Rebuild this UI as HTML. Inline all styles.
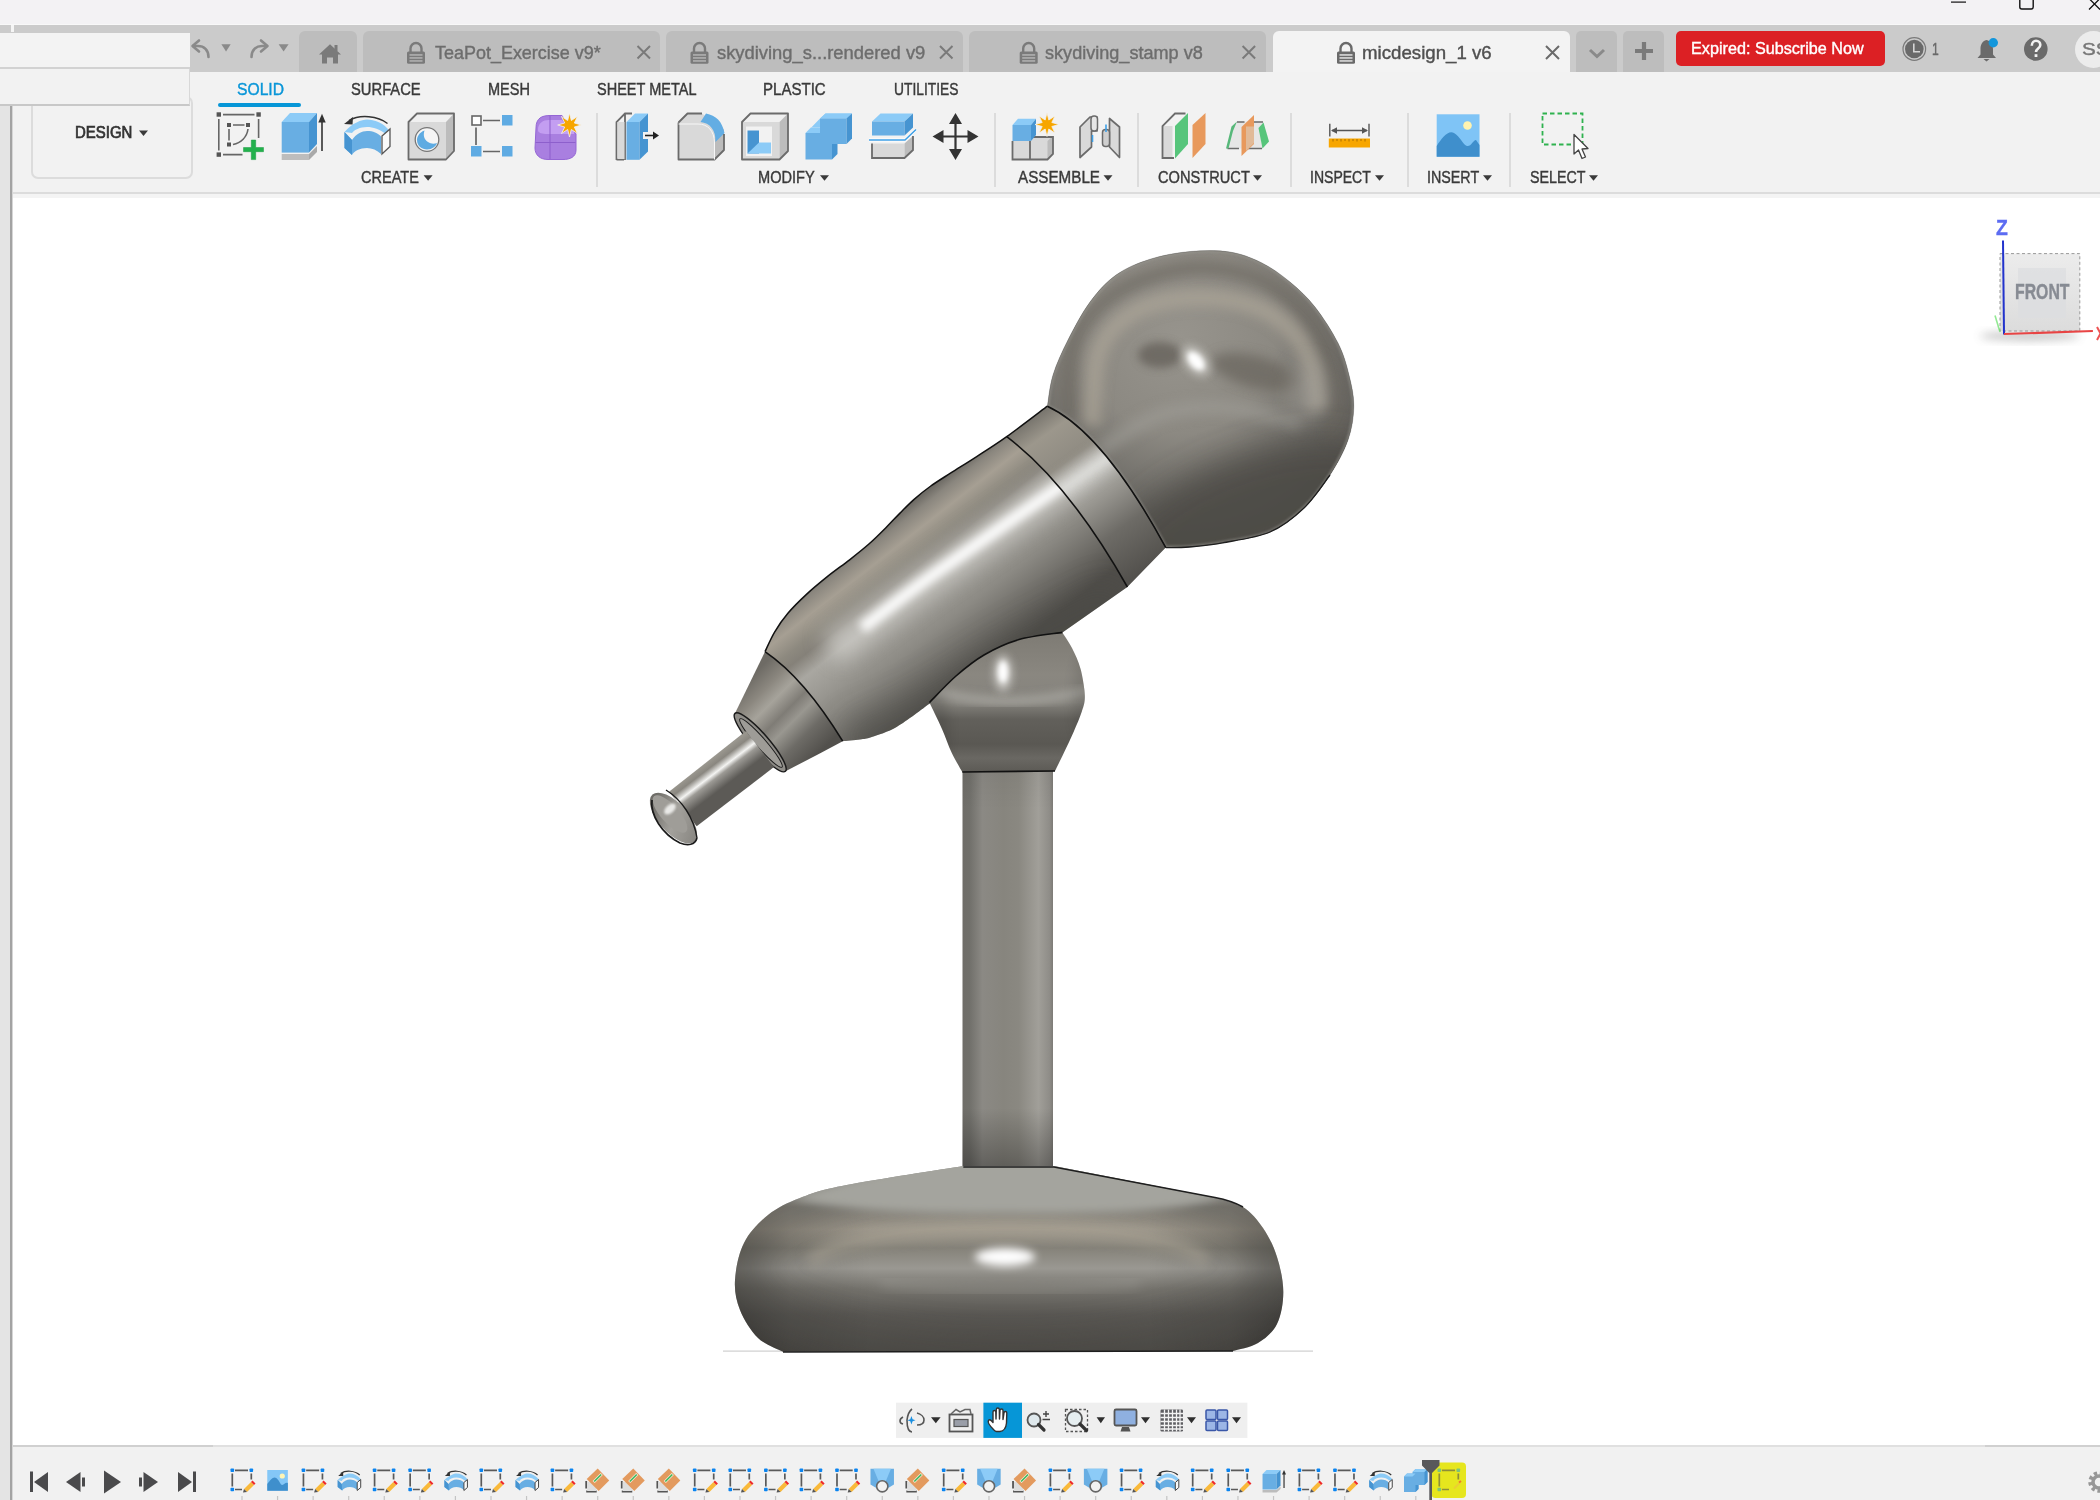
<!DOCTYPE html>
<html><head><meta charset="utf-8">
<style>
*{margin:0;padding:0;box-sizing:border-box}
html,body{width:2100px;height:1500px;overflow:hidden;background:#ffffff;font-family:"Liberation Sans",sans-serif}
.a{position:absolute}
.t{position:absolute;white-space:nowrap;transform-origin:0 0;-webkit-text-stroke:0.4px currentColor}
svg{position:absolute;left:0;top:0;overflow:visible}
</style></head><body>
<div class="a" style="left:0px;top:0px;width:2100px;height:25px;background:#f3f2f4;"></div><div class="a" style="left:0px;top:25px;width:2100px;height:47px;background:#cbcbcb;"></div><div class="a" style="left:0px;top:23.8px;width:2100px;height:1.4px;background:#f8f8f8;"></div><div class="a" style="left:11px;top:25px;width:3px;height:6.8px;background:#f5f5f5;"></div><div class="a" style="left:0px;top:33px;width:190px;height:36px;background:#f3f3f3;border-bottom:2px solid #d2d2d2"></div><div class="a" style="left:0px;top:69px;width:190px;height:37px;background:#f2f2f2;border-bottom:2px solid #c8c8c8;border-right:1px solid #d8d8d8"></div><div class="a" style="left:299px;top:31px;width:58px;height:41px;background:#bdbdbd;border-radius:6px 6px 0 0"></div><div class="a" style="left:363px;top:31px;width:297px;height:41px;background:#bdbdbd;border-radius:6px 6px 0 0"></div><div class="a" style="left:666px;top:31px;width:297px;height:41px;background:#bdbdbd;border-radius:6px 6px 0 0"></div><div class="a" style="left:969px;top:31px;width:297px;height:41px;background:#bdbdbd;border-radius:6px 6px 0 0"></div><div class="a" style="left:1273px;top:31px;width:297px;height:41px;background:#f3f3f3;border-radius:6px 6px 0 0"></div><div class="a" style="left:1576px;top:31px;width:41px;height:41px;background:#bdbdbd;border-radius:5px 5px 0 0"></div><div class="a" style="left:1623px;top:31px;width:41px;height:41px;background:#bdbdbd;border-radius:5px 5px 0 0"></div><div class="a" style="left:1676px;top:31px;width:209px;height:35px;background:#dc2024;border-radius:5px"></div><div class="a" style="left:2075px;top:31px;width:37px;height:37px;border-radius:50%;background:#ececec"></div><div class="a" style="left:190px;top:72px;width:1910px;height:121px;background:#f2f2f2;"></div><div class="a" style="left:13px;top:106px;width:177px;height:87px;background:#f2f2f2;"></div><div class="a" style="left:0px;top:106px;width:10px;height:1394px;background:#e4e4e4;"></div><div class="a" style="left:10px;top:106px;width:2px;height:1394px;background:#a3a3a3;"></div><div class="a" style="left:12px;top:106px;width:1px;height:1394px;background:#d6d6d6;"></div><div class="a" style="left:13px;top:192px;width:2087px;height:2px;background:#dcdcdc;"></div><div class="a" style="left:13px;top:194px;width:2087px;height:4px;background:#f4f4f4;"></div><div class="a" style="left:31px;top:96px;width:162px;height:83px;background:#f2f2f2;border:2px solid #dcdcdc;border-radius:7px"></div><div class="a" style="left:0px;top:69px;width:190px;height:37px;background:#f2f2f2;border-bottom:2px solid #c8c8c8;border-right:1px solid #d8d8d8"></div><div class="a" style="left:218px;top:103px;width:83px;height:4px;background:#0696d7;border-radius:2px"></div><div class="a" style="left:596px;top:113px;width:2px;height:74px;background:#dcdcdc;"></div><div class="a" style="left:994px;top:113px;width:2px;height:74px;background:#dcdcdc;"></div><div class="a" style="left:1137px;top:113px;width:2px;height:74px;background:#dcdcdc;"></div><div class="a" style="left:1290px;top:113px;width:2px;height:74px;background:#dcdcdc;"></div><div class="a" style="left:1407px;top:113px;width:2px;height:74px;background:#dcdcdc;"></div><div class="a" style="left:1509px;top:113px;width:2px;height:74px;background:#dcdcdc;"></div><div class="a" style="left:13px;top:1445px;width:2087px;height:55px;background:#f1f1f1;"></div><div class="a" style="left:13px;top:1444.8px;width:2087px;height:1.8px;background:#e0e0e0;"></div><div class="a" style="left:13px;top:1444.8px;width:200px;height:1.8px;background:#d0d0d0;"></div><div class="a" style="left:1985px;top:1444.8px;width:115px;height:1.8px;background:#d0d0d0;"></div><div class="t" style="left:350.94px;top:81.47px;font-size:16.06px;line-height:16.06px;color:#3a3a3a;font-weight:normal;transform:scaleX(0.9188);">SURFACE</div><div class="t" style="left:488.16px;top:81.47px;font-size:16.06px;line-height:16.06px;color:#3a3a3a;font-weight:normal;transform:scaleX(0.9059);">MESH</div><div class="t" style="left:596.55px;top:81.47px;font-size:16.06px;line-height:16.06px;color:#3a3a3a;font-weight:normal;transform:scaleX(0.9047);">SHEET METAL</div><div class="t" style="left:762.82px;top:81.47px;font-size:16.06px;line-height:16.06px;color:#3a3a3a;font-weight:normal;transform:scaleX(0.9369);">PLASTIC</div><div class="t" style="left:894.14px;top:81.47px;font-size:16.06px;line-height:16.06px;color:#3a3a3a;font-weight:normal;transform:scaleX(0.8599);">UTILITIES</div><div class="t" style="left:236.51px;top:81.47px;font-size:16.06px;line-height:16.06px;color:#0a96d8;font-weight:normal;transform:scaleX(0.9761);">SOLID</div><div class="t" style="left:74.83px;top:123.65px;font-size:16.20px;line-height:16.20px;color:#333333;font-weight:normal;transform:scaleX(0.9242);-webkit-text-stroke:0.7px #333">DESIGN</div><div class="t" style="left:361.22px;top:170.09px;font-size:16.62px;line-height:16.62px;color:#3a3a3a;font-weight:normal;transform:scaleX(0.8763);">CREATE</div><div class="t" style="left:757.86px;top:170.09px;font-size:16.62px;line-height:16.62px;color:#3a3a3a;font-weight:normal;transform:scaleX(0.8788);">MODIFY</div><div class="t" style="left:1018.00px;top:170.09px;font-size:16.62px;line-height:16.62px;color:#3a3a3a;font-weight:normal;transform:scaleX(0.9156);">ASSEMBLE</div><div class="t" style="left:1158.31px;top:170.09px;font-size:16.62px;line-height:16.62px;color:#3a3a3a;font-weight:normal;transform:scaleX(0.8812);">CONSTRUCT</div><div class="t" style="left:1309.90px;top:170.09px;font-size:16.62px;line-height:16.62px;color:#3a3a3a;font-weight:normal;transform:scaleX(0.8446);">INSPECT</div><div class="t" style="left:1426.88px;top:170.09px;font-size:16.62px;line-height:16.62px;color:#3a3a3a;font-weight:normal;transform:scaleX(0.8601);">INSERT</div><div class="t" style="left:1529.55px;top:170.09px;font-size:16.62px;line-height:16.62px;color:#3a3a3a;font-weight:normal;transform:scaleX(0.8583);">SELECT</div><div class="t" style="left:435.02px;top:43.52px;font-size:18.45px;line-height:18.45px;color:#6d6d6d;font-weight:normal;transform:scaleX(0.9741);">TeaPot_Exercise v9*</div><div class="t" style="left:716.61px;top:43.52px;font-size:18.45px;line-height:18.45px;color:#6d6d6d;font-weight:normal;transform:scaleX(0.9962);">skydiving_s...rendered v9</div><div class="t" style="left:1045.12px;top:43.52px;font-size:18.45px;line-height:18.45px;color:#6d6d6d;font-weight:normal;transform:scaleX(0.9808);">skydiving_stamp v8</div><div class="t" style="left:1362.13px;top:43.52px;font-size:18.45px;line-height:18.45px;color:#505050;font-weight:normal;transform:scaleX(1.0127);">micdesign_1 v6</div><div class="t" style="left:1691.13px;top:40.11px;font-size:17.18px;line-height:17.18px;color:#ffffff;font-weight:normal;transform:scaleX(0.9427);">Expired: Subscribe Now</div><div class="t" style="left:1931.74px;top:41.15px;font-size:16.20px;line-height:16.20px;color:#6a6a6a;font-weight:normal;transform:scaleX(0.7494);">1</div><div class="t" style="left:2082.36px;top:41.47px;font-size:16.06px;line-height:16.06px;color:#777777;font-weight:normal;transform:scaleX(1.2844);">SS</div><svg width="2100" height="1500" viewBox="0 0 2100 1500"><path d="M208.5,57 C208.5,50 204,46 198,46 L193.5,46" fill="none" stroke="#8a8a8a" stroke-width="2.6" stroke-linecap="round"/><path d="M199,40.5 L192.5,46 L199,51.5" fill="none" stroke="#8a8a8a" stroke-width="2.6" stroke-linecap="round" stroke-linejoin="round"/><path d="M221.4,44.3 L230.7,44.3 L226.05,51.4 Z" fill="#8a8a8a"/><path d="M251.5,57 C251.5,50 256,46 262,46 L266.5,46" fill="none" stroke="#8a8a8a" stroke-width="2.6" stroke-linecap="round"/><path d="M261,40.5 L267.5,46 L261,51.5" fill="none" stroke="#8a8a8a" stroke-width="2.6" stroke-linecap="round" stroke-linejoin="round"/><path d="M278.6,44.3 L288.6,44.3 L283.6,51.4 Z" fill="#8a8a8a"/><path d="M319,54.5 L330,44.3 L341,54.5 L338,54.5 L338,63.5 L333,63.5 L333,57.5 L327,57.5 L327,63.5 L322,63.5 L322,54.5 Z" fill="#7a7a7a"/><rect x="334.5" y="45" width="3" height="6" fill="#7a7a7a"/><path d="M410.5,52 L410.5,48.5 A5.5,5.5 0 0 1 421.5,48.5 L421.5,52" fill="none" stroke="#7a7a7a" stroke-width="2.4"/><rect x="407" y="51.5" width="18" height="12.2" rx="1.5" fill="#7a7a7a"/><rect x="409.5" y="54.3" width="13" height="1.3" fill="#bdbdbd"/><rect x="409.5" y="57.3" width="13" height="1.3" fill="#bdbdbd"/><rect x="409.5" y="60.3" width="13" height="1.3" fill="#bdbdbd"/><path d="M637.5,46 L650.0,58.5 M650.0,46 L637.5,58.5" stroke="#7a7a7a" stroke-width="2"/><path d="M694.0,52 L694.0,48.5 A5.5,5.5 0 0 1 705.0,48.5 L705.0,52" fill="none" stroke="#7a7a7a" stroke-width="2.4"/><rect x="690.5" y="51.5" width="18" height="12.2" rx="1.5" fill="#7a7a7a"/><rect x="693.0" y="54.3" width="13" height="1.3" fill="#bdbdbd"/><rect x="693.0" y="57.3" width="13" height="1.3" fill="#bdbdbd"/><rect x="693.0" y="60.3" width="13" height="1.3" fill="#bdbdbd"/><path d="M940,46 L952.5,58.5 M952.5,46 L940,58.5" stroke="#7a7a7a" stroke-width="2"/><path d="M1023.2,52 L1023.2,48.5 A5.5,5.5 0 0 1 1034.2,48.5 L1034.2,52" fill="none" stroke="#7a7a7a" stroke-width="2.4"/><rect x="1019.7" y="51.5" width="18" height="12.2" rx="1.5" fill="#7a7a7a"/><rect x="1022.2" y="54.3" width="13" height="1.3" fill="#bdbdbd"/><rect x="1022.2" y="57.3" width="13" height="1.3" fill="#bdbdbd"/><rect x="1022.2" y="60.3" width="13" height="1.3" fill="#bdbdbd"/><path d="M1242.6,46 L1255.1,58.5 M1255.1,46 L1242.6,58.5" stroke="#7a7a7a" stroke-width="2"/><path d="M1340.5,52 L1340.5,48.5 A5.5,5.5 0 0 1 1351.5,48.5 L1351.5,52" fill="none" stroke="#6a6a6a" stroke-width="2.4"/><rect x="1337" y="51.5" width="18" height="12.2" rx="1.5" fill="#6a6a6a"/><rect x="1339.5" y="54.3" width="13" height="1.3" fill="#f3f3f3"/><rect x="1339.5" y="57.3" width="13" height="1.3" fill="#f3f3f3"/><rect x="1339.5" y="60.3" width="13" height="1.3" fill="#f3f3f3"/><path d="M1546,46 L1559,59 M1559,46 L1546,59" stroke="#6a6a6a" stroke-width="2"/><path d="M1590,50 L1597,56.5 L1604,50" fill="none" stroke="#8a8a8a" stroke-width="3"/><path d="M1644,42 L1644,60 M1635,51 L1653,51" stroke="#7a7a7a" stroke-width="4.2"/><circle cx="1914.3" cy="49" r="11.3" fill="none" stroke="#7a7a7a" stroke-width="1.2"/><circle cx="1914.3" cy="49" r="9.3" fill="#6a6a6a"/><path d="M1913.8,43.5 L1913.8,51.8 L1920,51.8" fill="none" stroke="#d6d6d6" stroke-width="1.6"/><path d="M1986.5,37.5 L1986.5,40 C1982,41 1980.5,45 1980.5,49 L1980.5,54.5 L1977.5,58 L1996,58 L1993,54.5 L1993,49 C1993,45 1991,41 1986.5,40 Z" fill="#6a6a6a"/><path d="M1983.5,59 L1989.5,59 L1986.5,61.5 Z" fill="#6a6a6a"/><circle cx="1993.3" cy="42.8" r="4.7" fill="#1296db"/><circle cx="2035.8" cy="49" r="11.8" fill="#6a6a6a"/><path d="M2031.8,45.8 C2031.8,42.5 2034,40.8 2036,40.8 C2038.5,40.8 2040.3,42.6 2040.3,45 C2040.3,48.5 2036,48.6 2036,52" fill="none" stroke="#f2f2f2" stroke-width="2.6"/><rect x="2034.6" y="54.2" width="2.8" height="2.8" fill="#f2f2f2"/><rect x="1951" y="1.5" width="15" height="1.2" fill="#111"/><rect x="2019.8" y="-6" width="13.4" height="15" rx="2" fill="none" stroke="#111" stroke-width="1.4"/><path d="M2089,9.5 L2100,-1.5 M2089,-1.5 L2100,9.5" stroke="#111" stroke-width="1.3"/><path d="M139,130.5 L148,130.5 L143.5,136.0 Z" fill="#3a3a3a"/><path d="M423.6,175.3 L432.6,175.3 L428.1,180.8 Z" fill="#3a3a3a"/><path d="M820,175.3 L829,175.3 L824.5,180.8 Z" fill="#3a3a3a"/><path d="M1103.5,175.3 L1112.5,175.3 L1108.0,180.8 Z" fill="#3a3a3a"/><path d="M1253,175.3 L1262,175.3 L1257.5,180.8 Z" fill="#3a3a3a"/><path d="M1375,175.3 L1384,175.3 L1379.5,180.8 Z" fill="#3a3a3a"/><path d="M1483,175.3 L1492,175.3 L1487.5,180.8 Z" fill="#3a3a3a"/><path d="M1589,175.3 L1598,175.3 L1593.5,180.8 Z" fill="#3a3a3a"/><g stroke="#666" stroke-width="1.6" fill="none"><path d="M223,114.6 L254.5,114.6 M218.8,119 L218.8,150.5 M258.6,119 L258.6,138 M223,154.6 L242.5,154.6"/><path d="M233,125 L244.5,125 M229,129 L229,140.5 M248,129 C247,137 241,143 233,144.5"/></g><rect x="216.60000000000002" y="112.3" width="4.4" height="4.4" fill="#555"/><rect x="256.40000000000003" y="112.3" width="4.4" height="4.4" fill="#555"/><rect x="216.60000000000002" y="152.4" width="4.4" height="4.4" fill="#555"/><rect x="227.0" y="123.0" width="4" height="4" fill="#555"/><rect x="246.0" y="123.0" width="4" height="4" fill="#555"/><rect x="227.0" y="142.5" width="4" height="4" fill="#555"/><path d="M251.3,140 L255.7,140 L255.7,147.5 L263.5,147.5 L263.5,151.7 L255.7,151.7 L255.7,159.6 L251.3,159.6 L251.3,151.7 L243.5,151.7 L243.5,147.5 L251.3,147.5 Z" fill="#22b14c" stroke="#1a9a40" stroke-width="0.5"/><path d="M281.7,154 L309,154 L309,160 L281.7,160 Z" fill="#bdbdbd"/><path d="M309,154 L317,146 L317,152 L309,160 Z" fill="#a9a9a9"/><path d="M281.7,122 L290,113 L317,113 L309,122 Z" fill="#8ccbf7"/><rect x="281.7" y="122" width="27.3" height="30.6" fill="#68aee3"/><path d="M309,122 L317,113 L317,144 L309,152.6 Z" fill="#4694d1"/><path d="M322,120 L322,151" stroke="#333" stroke-width="1.6"/><path d="M318.3,122.5 L322,113.8 L325.7,122.5 Z" fill="#333"/><path d="M344.5,132 C352,123 362,119.5 367,119.5 C374,119.5 384,123 389.5,131 L386,134 C380,129.5 373,127 367,127 C360,127 354,130 352,133 Z" fill="#8ccbf7"/><path d="M344.5,132 L352,140 C356,134 362,131 367,131 C373,131 378,133 381,136.5 L381,154 C377,150 372,148 367,148 C360,148 354,151 352,155 L344.5,148 Z" fill="#68aee3"/><path d="M344.5,132 L352,140 L352,155 L344.5,148 Z" fill="#4694d1"/><path d="M382,136 L390,129 L390,146.5 L382,154 Z" fill="#fafafa" stroke="#555" stroke-width="1.3"/><path d="M387.5,123.5 C378,116 360,114 349,120.5" fill="none" stroke="#333" stroke-width="1.4"/><path d="M344,124 L353,117 L352.5,124.5 Z" fill="#333"/><path d="M408.5,122 L417,113.5 L454,113.5 L446,122 Z" fill="#f0f0f0"/><rect x="408.5" y="122" width="37.5" height="37.5" fill="#d9d9d9"/><path d="M446,122 L454,113.5 L454,151 L446,159.5 Z" fill="#bcbcbc"/><path d="M408.5,159.5 L408.5,122 L417,113.5 L454,113.5 L454,151 L446,159.5 Z" fill="none" stroke="#6b6b6b" stroke-width="1.8" stroke-linejoin="round"/><circle cx="427" cy="139.5" r="11.8" fill="#f5f5f5" stroke="#777" stroke-width="1.3"/><path d="M424.5,130.5 C419,132.5 417,137 417,140 C417,146 422,149.5 427,149.5 C432,149.5 436,146.5 437,143 C434,144 431,144 428,142 C424,139.5 423,135 424.5,130.5 Z" fill="#5eabe2"/><path d="M483,120.5 L500,120.5 M476,127.5 L476,145 M483,151.5 L500,151.5" stroke="#666" stroke-width="1.7"/><rect x="472" y="116" width="9" height="9" fill="#fff" stroke="#666" stroke-width="1.6"/><rect x="502" y="115" width="10.5" height="10.5" fill="#5fabe3"/><rect x="471" y="146" width="10.5" height="10.5" fill="#5fabe3"/><rect x="502" y="146" width="10.5" height="10.5" fill="#5fabe3"/><path d="M536,128 C536,118 542,115.5 550,115.5 L562,115.5 L566,122 L574,130 L576,134 L576,150 C576,157 570,159.5 563,159.5 L548,159.5 C540,159.5 535,155 535,148 Z" fill="#a97fe0" stroke="#9466d4" stroke-width="1"/><path d="M538,130 C538,123 543,120 549,120 L562,120 L566,126 L574,131 L574,134 L548,134 C542,134 538,133 538,130 Z" fill="#c9a6f5" opacity="0.8"/><path d="M550,116 L550,159 M535.5,142.5 L575.5,142.5" stroke="#8d5fcc" stroke-width="1"/><path d="M569.5,113 L571.3,120.5 L577.5,116.5 L574.3,123 L581.3,125 L574.3,127 L577.5,133.5 L571.3,129.5 L569.5,137 L567.7,129.5 L561.5,133.5 L564.7,127 L557.7,125 L564.7,123 L561.5,116.5 L567.7,120.5 Z" fill="#f7a600" stroke="#f2f2f2" stroke-width="0.8"/><path d="M625,113.5 L625,160 M616.5,160 L616.5,122 L625,113.5 L632,113.5 M616.5,159.5 L624,159.5" fill="none" stroke="#6b6b6b" stroke-width="1.8"/><rect x="617.5" y="122" width="7" height="37" fill="#d9d9d9"/><path d="M626.5,122 L635,113.5 L648,113.5 L639.5,122 Z" fill="#8ccbf7"/><rect x="626.5" y="122" width="13" height="37.8" fill="#68aee3"/><path d="M639.5,122 L648,113.5 L648,151.5 L639.5,159.8 Z" fill="#4694d1"/><rect x="643" y="132" width="6" height="7" fill="#f2f2f2"/><path d="M645,135.5 L654,135.5" stroke="#222" stroke-width="1.6"/><path d="M653,131.5 L659,135.5 L653,139.5 Z" fill="#222"/><path d="M678.5,159.5 L678.5,124 L687.5,113.5 L702,113.5 L724,130 L724,150 L714.5,159.5 Z" fill="#d9d9d9"/><path d="M714.5,138 L724,129 L724,150 L714.5,159.5 Z" fill="#bcbcbc"/><path d="M700.5,122 C710,123 716,130 715.5,142 L724.5,133 C722,121 716,115.5 706,113.5 Z" fill="#63ade3"/><path d="M678.5,122.5 L678.5,159.5 L714.5,159.5 L724,150 L724,134 M678.5,122.5 L687.5,113.5 L702,113.5" fill="none" stroke="#6b6b6b" stroke-width="1.8" stroke-linejoin="round"/><path d="M678.5,124 L698,124 C708,124 714,131 714.5,142 L714.5,159.5" fill="none" stroke="#f7f7f7" stroke-width="1"/><path d="M742,122 L750.5,113.5 L788,113.5 L779.5,122 Z" fill="#f0f0f0"/><rect x="742" y="122" width="37.5" height="37.5" fill="#d9d9d9"/><path d="M779.5,122 L788,113.5 L788,151 L779.5,159.5 Z" fill="#bcbcbc"/><rect x="746" y="126.5" width="26" height="29.5" fill="#f2f2f2"/><rect x="747.5" y="130.5" width="11.5" height="23" fill="#4694d1"/><path d="M747.5,153.5 L759,142.5 L771,142.5 L771,153.5 Z" fill="#8ccbf7"/><path d="M742,159.5 L742,122 L750.5,113.5 L788,113.5 L788,151 L779.5,159.5 Z" fill="none" stroke="#6b6b6b" stroke-width="1.8" stroke-linejoin="round"/><path d="M805.5,133.5 L811,127.5 L820,127.5 L820,118.5 L825.5,113.5 L852,113.5 L847,118.5 L820,118.5" fill="#8ccbf7"/><path d="M805.5,133 L811,127.5 L822,127.5 L822,133 Z" fill="#8ccbf7"/><path d="M820,118.5 L825.5,113.5 L852,113.5 L846.5,118.5 Z" fill="#8ccbf7"/><path d="M805.5,133 L820,133 L820,118.5 L846.5,118.5 L846.5,144 L832,144 L832,159.5 L805.5,159.5 Z" fill="#68aee3"/><path d="M846.5,118.5 L852,113.5 L852,138.5 L846.5,144 Z" fill="#4694d1"/><path d="M832,144 L837.5,144 L837.5,154 L832,159.5 Z" fill="#4694d1"/><path d="M872,121.5 L880.5,113.5 L913,113.5 L904.5,121.5 Z" fill="#8ccbf7"/><rect x="872" y="121.5" width="32.5" height="14" fill="#68aee3"/><path d="M904.5,121.5 L913,113.5 L913,127.5 L904.5,135.5 Z" fill="#4694d1"/><path d="M869,140 L905,140 L916,129.5" fill="none" stroke="#fff" stroke-width="3"/><path d="M869,140 L905,140 L916,129.5" fill="none" stroke="#3fa0e6" stroke-width="1.6"/><rect x="872" y="143.5" width="32.5" height="14.5" fill="#d9d9d9"/><path d="M904.5,143.5 L913,136 L913,150 L904.5,158 Z" fill="#bcbcbc"/><path d="M872,143.5 L872,158 L904.5,158 L913,150 L913,136" fill="none" stroke="#6b6b6b" stroke-width="1.8"/><path d="M955.5,121 L955.5,152 M940,136.5 L971,136.5" stroke="#333" stroke-width="2.2"/><path d="M955.5,113 L962,124 L949,124 Z M955.5,160 L962,149 L949,149 Z M932.5,136.5 L943.5,130 L943.5,143 Z M978.5,136.5 L967.5,130 L967.5,143 Z" fill="#333"/><path d="M1012.5,141 L1012.5,159.5 L1047.5,159.5 L1053,154 L1053,137 L1030,137 L1029.5,141 Z" fill="#d9d9d9"/><path d="M1047.5,141 L1053,136 L1053,154 L1047.5,159.5 Z" fill="#bcbcbc"/><path d="M1012.5,141 L1012.5,159.5 L1047.5,159.5 L1053,154 L1053,137 L1030,137 M1030,141 L1030,159.5" fill="none" stroke="#6b6b6b" stroke-width="1.8"/><path d="M1012.5,125 L1018,118.8 L1036,118.8 L1031,125 Z" fill="#8ccbf7"/><rect x="1012.5" y="125" width="18.5" height="16" fill="#68aee3"/><path d="M1031,125 L1036,118.8 L1036,135 L1031,141 Z" fill="#4694d1"/><path d="M1047,112.8 L1048.8,120 L1055,116 L1051.8,122.5 L1059,124.5 L1051.8,126.5 L1055,133 L1048.8,129 L1047,136.5 L1045.2,129 L1039,133 L1042.2,126.5 L1035,124.5 L1042.2,122.5 L1039,116 L1045.2,120 Z" fill="#f7a600" stroke="#f2f2f2" stroke-width="0.8"/><path d="M1080,157.5 L1080,127 L1090,117 L1097,117 L1097,131 L1091.5,131 L1091.5,147 Z" fill="#d9d9d9" stroke="#6b6b6b" stroke-width="1.7" stroke-linejoin="round"/><rect x="1091" y="116" width="6.5" height="15" rx="3" fill="#e6e6e6" stroke="#6b6b6b" stroke-width="1.5"/><path d="M1119.5,157.5 L1119.5,127 L1109.5,118.5 L1109.5,147 Z" fill="#d9d9d9" stroke="#6b6b6b" stroke-width="1.7" stroke-linejoin="round"/><rect x="1102.5" y="129.5" width="7" height="17" rx="3" fill="#cfcfcf" stroke="#6b6b6b" stroke-width="1.5"/><path d="M1092.5,135 L1092.5,142 M1106,124.5 L1106,132" stroke="#3fa0e6" stroke-width="1.6"/><rect x="1162.5" y="126" width="10" height="32" fill="#d9d9d9"/><path d="M1174,158 L1162.5,158 L1162.5,126 L1175,113.5 L1185.5,113.5" fill="none" stroke="#6b6b6b" stroke-width="1.8"/><path d="M1175,126 L1188,113 L1188,144 L1175,158.5 Z" fill="#57c57b"/><path d="M1192.5,125 L1205.5,113 L1205.5,144 L1192.5,158 Z" fill="#e8995c"/><path d="M1227,148.5 L1232,127 L1237,121.5 L1263,121.5 L1267.5,141.5 L1262,148.5 Z" fill="#e6e6e6"/><path d="M1227.5,148.5 L1239,148.5 M1246,148.5 L1262,148.5 M1237,122 L1244.5,122 M1251,122 L1263,122" stroke="#6b6b6b" stroke-width="1.7"/><path d="M1226,148.5 L1231.5,126.5 L1237,121.5 L1233,131 L1228.5,148.5 Z" fill="#57b87a"/><path d="M1258.5,128 L1263.5,122.5 L1269,141.5 L1262.5,148.5 Z" fill="#57c57b"/><path d="M1241.5,127 L1254,115 L1254,144 L1241.5,156 Z" fill="#e8995c"/><path d="M1246,126.5 L1254,126.5 L1254,143 L1246,151 Z" fill="#dfc2a8" opacity="0.8"/><rect x="1328.8" y="138.5" width="41.2" height="9" fill="#f7a600"/><path d="M1333,139 L1333,141.5 M1337,139 L1337,141 M1341,139 L1341,141.5 M1345,139 L1345,141 M1349,139 L1349,141.5 M1353,139 L1353,141 M1357,139 L1357,141.5 M1361,139 L1361,141 M1365,139 L1365,141.5" stroke="#a06800" stroke-width="0.9"/><path d="M1329.8,123.8 L1329.8,136.5 M1369,123.8 L1369,136.5 M1332,130.5 L1367,130.5" stroke="#555" stroke-width="1.4"/><path d="M1331,130.5 L1337,127.3 L1337,133.7 Z M1368,130.5 L1362,127.3 L1362,133.7 Z" fill="#555"/><rect x="1436.7" y="114.3" width="42.8" height="42.4" fill="#7fc4f6"/><path d="M1436.7,146 C1442,138 1448,130 1454,133 C1460,136 1463,145 1467,146 C1471,147 1473,140 1476,140 L1479.5,145 L1479.5,156.7 L1436.7,156.7 Z" fill="#3f8fcc"/><circle cx="1467.5" cy="125.5" r="4.3" fill="#fff3b0"/><rect x="1542.5" y="113.5" width="40" height="31" fill="none" stroke="#2fb24f" stroke-width="1.8" stroke-dasharray="4.5,3"/><path d="M1574,134.5 L1574,154 L1578.5,150 L1582,158.5 L1585.5,157 L1582,149 L1588,148.5 Z" fill="#fff" stroke="#444" stroke-width="1.3" stroke-linejoin="round"/></svg><svg width="2100" height="1500" viewBox="0 0 2100 1500"><rect x="30" y="1471.5" width="3" height="20.5" fill="#4a4a4c"/><path d="M34,1482 L48,1472 L48,1492 Z" fill="#4a4a4c"/><path d="M66,1482 L80.5,1472 L80.5,1492 Z" fill="#4a4a4c"/><rect x="82" y="1477.5" width="3" height="9" fill="#4a4a4c"/><path d="M104,1470.5 L121,1482 L104,1493.5 Z" fill="#4a4a4c"/><rect x="139" y="1477.5" width="3" height="9" fill="#4a4a4c"/><path d="M143.5,1472 L158,1482 L143.5,1492 Z" fill="#4a4a4c"/><path d="M178,1472 L192,1482 L178,1492 Z" fill="#4a4a4c"/><rect x="193" y="1471.5" width="3" height="20.5" fill="#4a4a4c"/><path d="M235.0,1470.3 L248.0,1470.3 M232.3,1473.5 L232.3,1486.5 M251.3,1473.5 L251.3,1479.5 M235.0,1489.5 L242.0,1489.5" stroke="#5a5a5a" stroke-width="1.7"/><rect x="230.5" y="1468.5" width="3.6" height="3.6" rx="0.8" fill="#0a84f0"/><rect x="249.5" y="1468.5" width="3.6" height="3.6" rx="0.8" fill="#0a84f0"/><rect x="230.5" y="1487.7" width="3.6" height="3.6" rx="0.8" fill="#0a84f0"/><path d="M244.0,1489.0 L251.0,1482.0 L254.0,1485.0 L247.0,1492.0 Z" fill="#f9b93a"/><path d="M251.0,1482.0 L252.5,1480.5 L255.5,1483.5 L254.0,1485.0 Z" fill="#ee2a2a"/><path d="M244.0,1489.0 L247.0,1492.0 L243.0,1492.5 Z" fill="#555"/><rect x="241.4" y="1496" width="1.2" height="4" fill="#c4c4c4"/><rect x="267.27" y="1470" width="20.6" height="20.7" fill="#84c7f7"/><path d="M267.27,1484 C270.27,1480 273.27,1476 276.27,1478 C279.27,1480 280.27,1485 282.27,1485 C284.27,1485 285.27,1482 287.87,1483 L287.87,1490.7 L267.27,1490.7 Z" fill="#3f8fcc"/><circle cx="282.27" cy="1476" r="2.6" fill="#fff5b5"/><rect x="276.96999999999997" y="1496" width="1.2" height="4" fill="#c4c4c4"/><path d="M306.14,1470.3 L319.14,1470.3 M303.44,1473.5 L303.44,1486.5 M322.44,1473.5 L322.44,1479.5 M306.14,1489.5 L313.14,1489.5" stroke="#5a5a5a" stroke-width="1.7"/><rect x="301.64" y="1468.5" width="3.6" height="3.6" rx="0.8" fill="#0a84f0"/><rect x="320.64" y="1468.5" width="3.6" height="3.6" rx="0.8" fill="#0a84f0"/><rect x="301.64" y="1487.7" width="3.6" height="3.6" rx="0.8" fill="#0a84f0"/><path d="M315.14,1489.0 L322.14,1482.0 L325.14,1485.0 L318.14,1492.0 Z" fill="#f9b93a"/><path d="M322.14,1482.0 L323.64,1480.5 L326.64,1483.5 L325.14,1485.0 Z" fill="#ee2a2a"/><path d="M315.14,1489.0 L318.14,1492.0 L314.14,1492.5 Z" fill="#555"/><rect x="312.53999999999996" y="1496" width="1.2" height="4" fill="#c4c4c4"/><path d="M337.71000000000004,1480 C342.71000000000004,1475 347.71000000000004,1473.5 349.71000000000004,1473.5 C353.71000000000004,1473.5 357.71000000000004,1475.5 360.71000000000004,1479 L358.71000000000004,1481 C355.71000000000004,1478.5 352.71000000000004,1477.5 349.71000000000004,1477.5 C345.71000000000004,1477.5 342.71000000000004,1479 341.71000000000004,1481 Z" fill="#8ccbf7"/><path d="M337.71000000000004,1480 L341.71000000000004,1484 C343.71000000000004,1481 346.71000000000004,1479.5 349.71000000000004,1479.5 C352.71000000000004,1479.5 355.71000000000004,1480.5 357.21000000000004,1482.5 L357.21000000000004,1490 C355.21000000000004,1488 352.71000000000004,1487 349.71000000000004,1487 C346.21000000000004,1487 343.71000000000004,1488.5 342.21000000000004,1490.5 L337.71000000000004,1487 Z" fill="#68aee3"/><path d="M337.71000000000004,1480 L341.71000000000004,1484 L342.21000000000004,1490.5 L337.71000000000004,1487 Z" fill="#4694d1"/><path d="M357.21000000000004,1482.5 L360.71000000000004,1479.5 L360.71000000000004,1487.5 L357.21000000000004,1490.5 Z" fill="#fafafa" stroke="#444" stroke-width="1"/><path d="M359.71000000000004,1475 C354.71000000000004,1470.5 345.71000000000004,1470 340.71000000000004,1473.5" fill="none" stroke="#333" stroke-width="1.2"/><path d="M338.21000000000004,1476 L343.21000000000004,1471.5 L343.21000000000004,1476 Z" fill="#333"/><rect x="348.11" y="1496" width="1.2" height="4" fill="#c4c4c4"/><path d="M377.28,1470.3 L390.28,1470.3 M374.58,1473.5 L374.58,1486.5 M393.58,1473.5 L393.58,1479.5 M377.28,1489.5 L384.28,1489.5" stroke="#5a5a5a" stroke-width="1.7"/><rect x="372.78" y="1468.5" width="3.6" height="3.6" rx="0.8" fill="#0a84f0"/><rect x="391.78" y="1468.5" width="3.6" height="3.6" rx="0.8" fill="#0a84f0"/><rect x="372.78" y="1487.7" width="3.6" height="3.6" rx="0.8" fill="#0a84f0"/><path d="M386.28,1489.0 L393.28,1482.0 L396.28,1485.0 L389.28,1492.0 Z" fill="#f9b93a"/><path d="M393.28,1482.0 L394.78,1480.5 L397.78,1483.5 L396.28,1485.0 Z" fill="#ee2a2a"/><path d="M386.28,1489.0 L389.28,1492.0 L385.28,1492.5 Z" fill="#555"/><rect x="383.67999999999995" y="1496" width="1.2" height="4" fill="#c4c4c4"/><path d="M412.85,1470.3 L425.85,1470.3 M410.15000000000003,1473.5 L410.15000000000003,1486.5 M429.15000000000003,1473.5 L429.15000000000003,1479.5 M412.85,1489.5 L419.85,1489.5" stroke="#5a5a5a" stroke-width="1.7"/><rect x="408.35" y="1468.5" width="3.6" height="3.6" rx="0.8" fill="#0a84f0"/><rect x="427.35" y="1468.5" width="3.6" height="3.6" rx="0.8" fill="#0a84f0"/><rect x="408.35" y="1487.7" width="3.6" height="3.6" rx="0.8" fill="#0a84f0"/><path d="M421.85,1489.0 L428.85,1482.0 L431.85,1485.0 L424.85,1492.0 Z" fill="#f9b93a"/><path d="M428.85,1482.0 L430.35,1480.5 L433.35,1483.5 L431.85,1485.0 Z" fill="#ee2a2a"/><path d="M421.85,1489.0 L424.85,1492.0 L420.85,1492.5 Z" fill="#555"/><rect x="419.25" y="1496" width="1.2" height="4" fill="#c4c4c4"/><path d="M444.42,1480 C449.42,1475 454.42,1473.5 456.42,1473.5 C460.42,1473.5 464.42,1475.5 467.42,1479 L465.42,1481 C462.42,1478.5 459.42,1477.5 456.42,1477.5 C452.42,1477.5 449.42,1479 448.42,1481 Z" fill="#8ccbf7"/><path d="M444.42,1480 L448.42,1484 C450.42,1481 453.42,1479.5 456.42,1479.5 C459.42,1479.5 462.42,1480.5 463.92,1482.5 L463.92,1490 C461.92,1488 459.42,1487 456.42,1487 C452.92,1487 450.42,1488.5 448.92,1490.5 L444.42,1487 Z" fill="#68aee3"/><path d="M444.42,1480 L448.42,1484 L448.92,1490.5 L444.42,1487 Z" fill="#4694d1"/><path d="M463.92,1482.5 L467.42,1479.5 L467.42,1487.5 L463.92,1490.5 Z" fill="#fafafa" stroke="#444" stroke-width="1"/><path d="M466.42,1475 C461.42,1470.5 452.42,1470 447.42,1473.5" fill="none" stroke="#333" stroke-width="1.2"/><path d="M444.92,1476 L449.92,1471.5 L449.92,1476 Z" fill="#333"/><rect x="454.82" y="1496" width="1.2" height="4" fill="#c4c4c4"/><path d="M483.99,1470.3 L496.99,1470.3 M481.29,1473.5 L481.29,1486.5 M500.29,1473.5 L500.29,1479.5 M483.99,1489.5 L490.99,1489.5" stroke="#5a5a5a" stroke-width="1.7"/><rect x="479.49" y="1468.5" width="3.6" height="3.6" rx="0.8" fill="#0a84f0"/><rect x="498.49" y="1468.5" width="3.6" height="3.6" rx="0.8" fill="#0a84f0"/><rect x="479.49" y="1487.7" width="3.6" height="3.6" rx="0.8" fill="#0a84f0"/><path d="M492.99,1489.0 L499.99,1482.0 L502.99,1485.0 L495.99,1492.0 Z" fill="#f9b93a"/><path d="M499.99,1482.0 L501.49,1480.5 L504.49,1483.5 L502.99,1485.0 Z" fill="#ee2a2a"/><path d="M492.99,1489.0 L495.99,1492.0 L491.99,1492.5 Z" fill="#555"/><rect x="490.39" y="1496" width="1.2" height="4" fill="#c4c4c4"/><path d="M515.56,1480 C520.56,1475 525.56,1473.5 527.56,1473.5 C531.56,1473.5 535.56,1475.5 538.56,1479 L536.56,1481 C533.56,1478.5 530.56,1477.5 527.56,1477.5 C523.56,1477.5 520.56,1479 519.56,1481 Z" fill="#8ccbf7"/><path d="M515.56,1480 L519.56,1484 C521.56,1481 524.56,1479.5 527.56,1479.5 C530.56,1479.5 533.56,1480.5 535.06,1482.5 L535.06,1490 C533.06,1488 530.56,1487 527.56,1487 C524.06,1487 521.56,1488.5 520.06,1490.5 L515.56,1487 Z" fill="#68aee3"/><path d="M515.56,1480 L519.56,1484 L520.06,1490.5 L515.56,1487 Z" fill="#4694d1"/><path d="M535.06,1482.5 L538.56,1479.5 L538.56,1487.5 L535.06,1490.5 Z" fill="#fafafa" stroke="#444" stroke-width="1"/><path d="M537.56,1475 C532.56,1470.5 523.56,1470 518.56,1473.5" fill="none" stroke="#333" stroke-width="1.2"/><path d="M516.06,1476 L521.06,1471.5 L521.06,1476 Z" fill="#333"/><rect x="525.9599999999999" y="1496" width="1.2" height="4" fill="#c4c4c4"/><path d="M555.13,1470.3 L568.13,1470.3 M552.43,1473.5 L552.43,1486.5 M571.43,1473.5 L571.43,1479.5 M555.13,1489.5 L562.13,1489.5" stroke="#5a5a5a" stroke-width="1.7"/><rect x="550.63" y="1468.5" width="3.6" height="3.6" rx="0.8" fill="#0a84f0"/><rect x="569.63" y="1468.5" width="3.6" height="3.6" rx="0.8" fill="#0a84f0"/><rect x="550.63" y="1487.7" width="3.6" height="3.6" rx="0.8" fill="#0a84f0"/><path d="M564.13,1489.0 L571.13,1482.0 L574.13,1485.0 L567.13,1492.0 Z" fill="#f9b93a"/><path d="M571.13,1482.0 L572.63,1480.5 L575.63,1483.5 L574.13,1485.0 Z" fill="#ee2a2a"/><path d="M564.13,1489.0 L567.13,1492.0 L563.13,1492.5 Z" fill="#555"/><rect x="561.53" y="1496" width="1.2" height="4" fill="#c4c4c4"/><path d="M586.2,1488.5 L586.2,1481 M586.2,1491.5 L596.7,1491.5" stroke="#555" stroke-width="1.8"/><rect x="587.2" y="1482" width="9" height="9" fill="#dedede"/><path d="M597.7,1468.5 L609.2,1480.5 L598.7,1491 L586.7,1479 Z" fill="#e39a5e"/><path d="M593.7,1482 L601.7,1474" stroke="#fff" stroke-width="3" opacity="0.8"/><path d="M594.2,1481.5 L601.2,1474.5" stroke="#3cb95a" stroke-width="1.6"/><rect x="597.1" y="1496" width="1.2" height="4" fill="#c4c4c4"/><path d="M621.77,1488.5 L621.77,1481 M621.77,1491.5 L632.27,1491.5" stroke="#555" stroke-width="1.8"/><rect x="622.77" y="1482" width="9" height="9" fill="#dedede"/><path d="M633.27,1468.5 L644.77,1480.5 L634.27,1491 L622.27,1479 Z" fill="#e39a5e"/><path d="M629.27,1482 L637.27,1474" stroke="#fff" stroke-width="3" opacity="0.8"/><path d="M629.77,1481.5 L636.77,1474.5" stroke="#3cb95a" stroke-width="1.6"/><rect x="632.67" y="1496" width="1.2" height="4" fill="#c4c4c4"/><path d="M657.34,1488.5 L657.34,1481 M657.34,1491.5 L667.84,1491.5" stroke="#555" stroke-width="1.8"/><rect x="658.34" y="1482" width="9" height="9" fill="#dedede"/><path d="M668.84,1468.5 L680.34,1480.5 L669.84,1491 L657.84,1479 Z" fill="#e39a5e"/><path d="M664.84,1482 L672.84,1474" stroke="#fff" stroke-width="3" opacity="0.8"/><path d="M665.34,1481.5 L672.34,1474.5" stroke="#3cb95a" stroke-width="1.6"/><rect x="668.24" y="1496" width="1.2" height="4" fill="#c4c4c4"/><path d="M697.4100000000001,1470.3 L710.4100000000001,1470.3 M694.71,1473.5 L694.71,1486.5 M713.71,1473.5 L713.71,1479.5 M697.4100000000001,1489.5 L704.4100000000001,1489.5" stroke="#5a5a5a" stroke-width="1.7"/><rect x="692.9100000000001" y="1468.5" width="3.6" height="3.6" rx="0.8" fill="#0a84f0"/><rect x="711.9100000000001" y="1468.5" width="3.6" height="3.6" rx="0.8" fill="#0a84f0"/><rect x="692.9100000000001" y="1487.7" width="3.6" height="3.6" rx="0.8" fill="#0a84f0"/><path d="M706.4100000000001,1489.0 L713.4100000000001,1482.0 L716.4100000000001,1485.0 L709.4100000000001,1492.0 Z" fill="#f9b93a"/><path d="M713.4100000000001,1482.0 L714.9100000000001,1480.5 L717.9100000000001,1483.5 L716.4100000000001,1485.0 Z" fill="#ee2a2a"/><path d="M706.4100000000001,1489.0 L709.4100000000001,1492.0 L705.4100000000001,1492.5 Z" fill="#555"/><rect x="703.8100000000001" y="1496" width="1.2" height="4" fill="#c4c4c4"/><path d="M732.98,1470.3 L745.98,1470.3 M730.28,1473.5 L730.28,1486.5 M749.28,1473.5 L749.28,1479.5 M732.98,1489.5 L739.98,1489.5" stroke="#5a5a5a" stroke-width="1.7"/><rect x="728.48" y="1468.5" width="3.6" height="3.6" rx="0.8" fill="#0a84f0"/><rect x="747.48" y="1468.5" width="3.6" height="3.6" rx="0.8" fill="#0a84f0"/><rect x="728.48" y="1487.7" width="3.6" height="3.6" rx="0.8" fill="#0a84f0"/><path d="M741.98,1489.0 L748.98,1482.0 L751.98,1485.0 L744.98,1492.0 Z" fill="#f9b93a"/><path d="M748.98,1482.0 L750.48,1480.5 L753.48,1483.5 L751.98,1485.0 Z" fill="#ee2a2a"/><path d="M741.98,1489.0 L744.98,1492.0 L740.98,1492.5 Z" fill="#555"/><rect x="739.38" y="1496" width="1.2" height="4" fill="#c4c4c4"/><path d="M768.55,1470.3 L781.55,1470.3 M765.8499999999999,1473.5 L765.8499999999999,1486.5 M784.8499999999999,1473.5 L784.8499999999999,1479.5 M768.55,1489.5 L775.55,1489.5" stroke="#5a5a5a" stroke-width="1.7"/><rect x="764.05" y="1468.5" width="3.6" height="3.6" rx="0.8" fill="#0a84f0"/><rect x="783.05" y="1468.5" width="3.6" height="3.6" rx="0.8" fill="#0a84f0"/><rect x="764.05" y="1487.7" width="3.6" height="3.6" rx="0.8" fill="#0a84f0"/><path d="M777.55,1489.0 L784.55,1482.0 L787.55,1485.0 L780.55,1492.0 Z" fill="#f9b93a"/><path d="M784.55,1482.0 L786.05,1480.5 L789.05,1483.5 L787.55,1485.0 Z" fill="#ee2a2a"/><path d="M777.55,1489.0 L780.55,1492.0 L776.55,1492.5 Z" fill="#555"/><rect x="774.9499999999999" y="1496" width="1.2" height="4" fill="#c4c4c4"/><path d="M804.12,1470.3 L817.12,1470.3 M801.42,1473.5 L801.42,1486.5 M820.42,1473.5 L820.42,1479.5 M804.12,1489.5 L811.12,1489.5" stroke="#5a5a5a" stroke-width="1.7"/><rect x="799.62" y="1468.5" width="3.6" height="3.6" rx="0.8" fill="#0a84f0"/><rect x="818.62" y="1468.5" width="3.6" height="3.6" rx="0.8" fill="#0a84f0"/><rect x="799.62" y="1487.7" width="3.6" height="3.6" rx="0.8" fill="#0a84f0"/><path d="M813.12,1489.0 L820.12,1482.0 L823.12,1485.0 L816.12,1492.0 Z" fill="#f9b93a"/><path d="M820.12,1482.0 L821.62,1480.5 L824.62,1483.5 L823.12,1485.0 Z" fill="#ee2a2a"/><path d="M813.12,1489.0 L816.12,1492.0 L812.12,1492.5 Z" fill="#555"/><rect x="810.52" y="1496" width="1.2" height="4" fill="#c4c4c4"/><path d="M839.69,1470.3 L852.69,1470.3 M836.99,1473.5 L836.99,1486.5 M855.99,1473.5 L855.99,1479.5 M839.69,1489.5 L846.69,1489.5" stroke="#5a5a5a" stroke-width="1.7"/><rect x="835.19" y="1468.5" width="3.6" height="3.6" rx="0.8" fill="#0a84f0"/><rect x="854.19" y="1468.5" width="3.6" height="3.6" rx="0.8" fill="#0a84f0"/><rect x="835.19" y="1487.7" width="3.6" height="3.6" rx="0.8" fill="#0a84f0"/><path d="M848.69,1489.0 L855.69,1482.0 L858.69,1485.0 L851.69,1492.0 Z" fill="#f9b93a"/><path d="M855.69,1482.0 L857.19,1480.5 L860.19,1483.5 L858.69,1485.0 Z" fill="#ee2a2a"/><path d="M848.69,1489.0 L851.69,1492.0 L847.69,1492.5 Z" fill="#555"/><rect x="846.09" y="1496" width="1.2" height="4" fill="#c4c4c4"/><path d="M870.46,1468.7 L893.96,1468.7 L893.96,1484.5 L886.46,1489 L877.96,1489 L870.46,1484.5 Z" fill="#68aee3"/><path d="M873.46,1468.7 L890.96,1468.7 L885.46,1482 L878.96,1482 Z" fill="#8ccbf7"/><circle cx="882.26" cy="1486.3" r="5.6" fill="#f2f2f2" stroke="#666" stroke-width="1.6"/><rect x="881.66" y="1496" width="1.2" height="4" fill="#c4c4c4"/><path d="M906.33,1488.5 L906.33,1481 M906.33,1491.5 L916.83,1491.5" stroke="#555" stroke-width="1.8"/><rect x="907.33" y="1482" width="9" height="9" fill="#dedede"/><path d="M917.83,1468.5 L929.33,1480.5 L918.83,1491 L906.83,1479 Z" fill="#e39a5e"/><path d="M913.83,1482 L921.83,1474" stroke="#fff" stroke-width="3" opacity="0.8"/><path d="M914.33,1481.5 L921.33,1474.5" stroke="#3cb95a" stroke-width="1.6"/><rect x="917.23" y="1496" width="1.2" height="4" fill="#c4c4c4"/><path d="M946.4,1470.3 L959.4,1470.3 M943.6999999999999,1473.5 L943.6999999999999,1486.5 M962.6999999999999,1473.5 L962.6999999999999,1479.5 M946.4,1489.5 L953.4,1489.5" stroke="#5a5a5a" stroke-width="1.7"/><rect x="941.9" y="1468.5" width="3.6" height="3.6" rx="0.8" fill="#0a84f0"/><rect x="960.9" y="1468.5" width="3.6" height="3.6" rx="0.8" fill="#0a84f0"/><rect x="941.9" y="1487.7" width="3.6" height="3.6" rx="0.8" fill="#0a84f0"/><path d="M955.4,1489.0 L962.4,1482.0 L965.4,1485.0 L958.4,1492.0 Z" fill="#f9b93a"/><path d="M962.4,1482.0 L963.9,1480.5 L966.9,1483.5 L965.4,1485.0 Z" fill="#ee2a2a"/><path d="M955.4,1489.0 L958.4,1492.0 L954.4,1492.5 Z" fill="#555"/><rect x="952.8" y="1496" width="1.2" height="4" fill="#c4c4c4"/><path d="M977.1700000000001,1468.7 L1000.6700000000001,1468.7 L1000.6700000000001,1484.5 L993.1700000000001,1489 L984.6700000000001,1489 L977.1700000000001,1484.5 Z" fill="#68aee3"/><path d="M980.1700000000001,1468.7 L997.6700000000001,1468.7 L992.1700000000001,1482 L985.6700000000001,1482 Z" fill="#8ccbf7"/><circle cx="988.97" cy="1486.3" r="5.6" fill="#f2f2f2" stroke="#666" stroke-width="1.6"/><rect x="988.37" y="1496" width="1.2" height="4" fill="#c4c4c4"/><path d="M1013.04,1488.5 L1013.04,1481 M1013.04,1491.5 L1023.54,1491.5" stroke="#555" stroke-width="1.8"/><rect x="1014.04" y="1482" width="9" height="9" fill="#dedede"/><path d="M1024.54,1468.5 L1036.04,1480.5 L1025.54,1491 L1013.54,1479 Z" fill="#e39a5e"/><path d="M1020.54,1482 L1028.54,1474" stroke="#fff" stroke-width="3" opacity="0.8"/><path d="M1021.04,1481.5 L1028.04,1474.5" stroke="#3cb95a" stroke-width="1.6"/><rect x="1023.9399999999999" y="1496" width="1.2" height="4" fill="#c4c4c4"/><path d="M1053.1100000000001,1470.3 L1066.1100000000001,1470.3 M1050.41,1473.5 L1050.41,1486.5 M1069.41,1473.5 L1069.41,1479.5 M1053.1100000000001,1489.5 L1060.1100000000001,1489.5" stroke="#5a5a5a" stroke-width="1.7"/><rect x="1048.6100000000001" y="1468.5" width="3.6" height="3.6" rx="0.8" fill="#0a84f0"/><rect x="1067.6100000000001" y="1468.5" width="3.6" height="3.6" rx="0.8" fill="#0a84f0"/><rect x="1048.6100000000001" y="1487.7" width="3.6" height="3.6" rx="0.8" fill="#0a84f0"/><path d="M1062.1100000000001,1489.0 L1069.1100000000001,1482.0 L1072.1100000000001,1485.0 L1065.1100000000001,1492.0 Z" fill="#f9b93a"/><path d="M1069.1100000000001,1482.0 L1070.6100000000001,1480.5 L1073.6100000000001,1483.5 L1072.1100000000001,1485.0 Z" fill="#ee2a2a"/><path d="M1062.1100000000001,1489.0 L1065.1100000000001,1492.0 L1061.1100000000001,1492.5 Z" fill="#555"/><rect x="1059.5100000000002" y="1496" width="1.2" height="4" fill="#c4c4c4"/><path d="M1083.88,1468.7 L1107.38,1468.7 L1107.38,1484.5 L1099.88,1489 L1091.38,1489 L1083.88,1484.5 Z" fill="#68aee3"/><path d="M1086.88,1468.7 L1104.38,1468.7 L1098.88,1482 L1092.38,1482 Z" fill="#8ccbf7"/><circle cx="1095.68" cy="1486.3" r="5.6" fill="#f2f2f2" stroke="#666" stroke-width="1.6"/><rect x="1095.0800000000002" y="1496" width="1.2" height="4" fill="#c4c4c4"/><path d="M1124.25,1470.3 L1137.25,1470.3 M1121.55,1473.5 L1121.55,1486.5 M1140.55,1473.5 L1140.55,1479.5 M1124.25,1489.5 L1131.25,1489.5" stroke="#5a5a5a" stroke-width="1.7"/><rect x="1119.75" y="1468.5" width="3.6" height="3.6" rx="0.8" fill="#0a84f0"/><rect x="1138.75" y="1468.5" width="3.6" height="3.6" rx="0.8" fill="#0a84f0"/><rect x="1119.75" y="1487.7" width="3.6" height="3.6" rx="0.8" fill="#0a84f0"/><path d="M1133.25,1489.0 L1140.25,1482.0 L1143.25,1485.0 L1136.25,1492.0 Z" fill="#f9b93a"/><path d="M1140.25,1482.0 L1141.75,1480.5 L1144.75,1483.5 L1143.25,1485.0 Z" fill="#ee2a2a"/><path d="M1133.25,1489.0 L1136.25,1492.0 L1132.25,1492.5 Z" fill="#555"/><rect x="1130.65" y="1496" width="1.2" height="4" fill="#c4c4c4"/><path d="M1155.8200000000002,1480 C1160.8200000000002,1475 1165.8200000000002,1473.5 1167.8200000000002,1473.5 C1171.8200000000002,1473.5 1175.8200000000002,1475.5 1178.8200000000002,1479 L1176.8200000000002,1481 C1173.8200000000002,1478.5 1170.8200000000002,1477.5 1167.8200000000002,1477.5 C1163.8200000000002,1477.5 1160.8200000000002,1479 1159.8200000000002,1481 Z" fill="#8ccbf7"/><path d="M1155.8200000000002,1480 L1159.8200000000002,1484 C1161.8200000000002,1481 1164.8200000000002,1479.5 1167.8200000000002,1479.5 C1170.8200000000002,1479.5 1173.8200000000002,1480.5 1175.3200000000002,1482.5 L1175.3200000000002,1490 C1173.3200000000002,1488 1170.8200000000002,1487 1167.8200000000002,1487 C1164.3200000000002,1487 1161.8200000000002,1488.5 1160.3200000000002,1490.5 L1155.8200000000002,1487 Z" fill="#68aee3"/><path d="M1155.8200000000002,1480 L1159.8200000000002,1484 L1160.3200000000002,1490.5 L1155.8200000000002,1487 Z" fill="#4694d1"/><path d="M1175.3200000000002,1482.5 L1178.8200000000002,1479.5 L1178.8200000000002,1487.5 L1175.3200000000002,1490.5 Z" fill="#fafafa" stroke="#444" stroke-width="1"/><path d="M1177.8200000000002,1475 C1172.8200000000002,1470.5 1163.8200000000002,1470 1158.8200000000002,1473.5" fill="none" stroke="#333" stroke-width="1.2"/><path d="M1156.3200000000002,1476 L1161.3200000000002,1471.5 L1161.3200000000002,1476 Z" fill="#333"/><rect x="1166.2200000000003" y="1496" width="1.2" height="4" fill="#c4c4c4"/><path d="M1195.3899999999999,1470.3 L1208.3899999999999,1470.3 M1192.6899999999998,1473.5 L1192.6899999999998,1486.5 M1211.6899999999998,1473.5 L1211.6899999999998,1479.5 M1195.3899999999999,1489.5 L1202.3899999999999,1489.5" stroke="#5a5a5a" stroke-width="1.7"/><rect x="1190.8899999999999" y="1468.5" width="3.6" height="3.6" rx="0.8" fill="#0a84f0"/><rect x="1209.8899999999999" y="1468.5" width="3.6" height="3.6" rx="0.8" fill="#0a84f0"/><rect x="1190.8899999999999" y="1487.7" width="3.6" height="3.6" rx="0.8" fill="#0a84f0"/><path d="M1204.3899999999999,1489.0 L1211.3899999999999,1482.0 L1214.3899999999999,1485.0 L1207.3899999999999,1492.0 Z" fill="#f9b93a"/><path d="M1211.3899999999999,1482.0 L1212.8899999999999,1480.5 L1215.8899999999999,1483.5 L1214.3899999999999,1485.0 Z" fill="#ee2a2a"/><path d="M1204.3899999999999,1489.0 L1207.3899999999999,1492.0 L1203.3899999999999,1492.5 Z" fill="#555"/><rect x="1201.79" y="1496" width="1.2" height="4" fill="#c4c4c4"/><path d="M1230.96,1470.3 L1243.96,1470.3 M1228.26,1473.5 L1228.26,1486.5 M1247.26,1473.5 L1247.26,1479.5 M1230.96,1489.5 L1237.96,1489.5" stroke="#5a5a5a" stroke-width="1.7"/><rect x="1226.46" y="1468.5" width="3.6" height="3.6" rx="0.8" fill="#0a84f0"/><rect x="1245.46" y="1468.5" width="3.6" height="3.6" rx="0.8" fill="#0a84f0"/><rect x="1226.46" y="1487.7" width="3.6" height="3.6" rx="0.8" fill="#0a84f0"/><path d="M1239.96,1489.0 L1246.96,1482.0 L1249.96,1485.0 L1242.96,1492.0 Z" fill="#f9b93a"/><path d="M1246.96,1482.0 L1248.46,1480.5 L1251.46,1483.5 L1249.96,1485.0 Z" fill="#ee2a2a"/><path d="M1239.96,1489.0 L1242.96,1492.0 L1238.96,1492.5 Z" fill="#555"/><rect x="1237.3600000000001" y="1496" width="1.2" height="4" fill="#c4c4c4"/><path d="M1262.53,1490 L1276.53,1490 L1280.53,1486.5 L1280.53,1489 L1276.53,1492.5 L1262.53,1492.5 Z" fill="#bdbdbd"/><path d="M1262.53,1474 L1266.53,1470 L1280.53,1470 L1276.53,1474 Z" fill="#8ccbf7"/><rect x="1262.53" y="1474" width="14" height="15.5" fill="#68aee3"/><path d="M1276.53,1474 L1280.53,1470 L1280.53,1485.5 L1276.53,1489.5 Z" fill="#4694d1"/><path d="M1284.03,1473 L1284.03,1488" stroke="#333" stroke-width="1.2"/><path d="M1282.03,1474.5 L1284.03,1470 L1286.03,1474.5 Z" fill="#333"/><rect x="1272.93" y="1496" width="1.2" height="4" fill="#c4c4c4"/><path d="M1302.1,1470.3 L1315.1,1470.3 M1299.3999999999999,1473.5 L1299.3999999999999,1486.5 M1318.3999999999999,1473.5 L1318.3999999999999,1479.5 M1302.1,1489.5 L1309.1,1489.5" stroke="#5a5a5a" stroke-width="1.7"/><rect x="1297.6" y="1468.5" width="3.6" height="3.6" rx="0.8" fill="#0a84f0"/><rect x="1316.6" y="1468.5" width="3.6" height="3.6" rx="0.8" fill="#0a84f0"/><rect x="1297.6" y="1487.7" width="3.6" height="3.6" rx="0.8" fill="#0a84f0"/><path d="M1311.1,1489.0 L1318.1,1482.0 L1321.1,1485.0 L1314.1,1492.0 Z" fill="#f9b93a"/><path d="M1318.1,1482.0 L1319.6,1480.5 L1322.6,1483.5 L1321.1,1485.0 Z" fill="#ee2a2a"/><path d="M1311.1,1489.0 L1314.1,1492.0 L1310.1,1492.5 Z" fill="#555"/><rect x="1308.5" y="1496" width="1.2" height="4" fill="#c4c4c4"/><path d="M1337.67,1470.3 L1350.67,1470.3 M1334.97,1473.5 L1334.97,1486.5 M1353.97,1473.5 L1353.97,1479.5 M1337.67,1489.5 L1344.67,1489.5" stroke="#5a5a5a" stroke-width="1.7"/><rect x="1333.17" y="1468.5" width="3.6" height="3.6" rx="0.8" fill="#0a84f0"/><rect x="1352.17" y="1468.5" width="3.6" height="3.6" rx="0.8" fill="#0a84f0"/><rect x="1333.17" y="1487.7" width="3.6" height="3.6" rx="0.8" fill="#0a84f0"/><path d="M1346.67,1489.0 L1353.67,1482.0 L1356.67,1485.0 L1349.67,1492.0 Z" fill="#f9b93a"/><path d="M1353.67,1482.0 L1355.17,1480.5 L1358.17,1483.5 L1356.67,1485.0 Z" fill="#ee2a2a"/><path d="M1346.67,1489.0 L1349.67,1492.0 L1345.67,1492.5 Z" fill="#555"/><rect x="1344.0700000000002" y="1496" width="1.2" height="4" fill="#c4c4c4"/><path d="M1369.24,1480 C1374.24,1475 1379.24,1473.5 1381.24,1473.5 C1385.24,1473.5 1389.24,1475.5 1392.24,1479 L1390.24,1481 C1387.24,1478.5 1384.24,1477.5 1381.24,1477.5 C1377.24,1477.5 1374.24,1479 1373.24,1481 Z" fill="#8ccbf7"/><path d="M1369.24,1480 L1373.24,1484 C1375.24,1481 1378.24,1479.5 1381.24,1479.5 C1384.24,1479.5 1387.24,1480.5 1388.74,1482.5 L1388.74,1490 C1386.74,1488 1384.24,1487 1381.24,1487 C1377.74,1487 1375.24,1488.5 1373.74,1490.5 L1369.24,1487 Z" fill="#68aee3"/><path d="M1369.24,1480 L1373.24,1484 L1373.74,1490.5 L1369.24,1487 Z" fill="#4694d1"/><path d="M1388.74,1482.5 L1392.24,1479.5 L1392.24,1487.5 L1388.74,1490.5 Z" fill="#fafafa" stroke="#444" stroke-width="1"/><path d="M1391.24,1475 C1386.24,1470.5 1377.24,1470 1372.24,1473.5" fill="none" stroke="#333" stroke-width="1.2"/><path d="M1369.74,1476 L1374.74,1471.5 L1374.74,1476 Z" fill="#333"/><rect x="1379.64" y="1496" width="1.2" height="4" fill="#c4c4c4"/><path d="M1404.01,1476.5 L1407.01,1473.5 L1412.51,1473.5 L1412.51,1472 L1415.51,1469 L1427.51,1469 L1427.51,1482 L1424.51,1485 L1418.51,1485 L1418.51,1489 L1415.51,1492 L1404.01,1492 Z" fill="#68aee3"/><path d="M1404.01,1476.5 L1407.01,1473.5 L1415.51,1473.5 L1412.51,1476.5 Z M1412.51,1472 L1415.51,1469 L1427.51,1469 L1424.51,1472 Z" fill="#8ccbf7"/><path d="M1424.51,1472 L1427.51,1469 L1427.51,1482 L1424.51,1485 Z M1415.51,1485 L1418.51,1485 L1418.51,1489 L1415.51,1492 Z" fill="#4694d1"/><rect x="1415.21" y="1496" width="1.2" height="4" fill="#c4c4c4"/><rect x="1431.5" y="1462.5" width="34.5" height="35.5" rx="4" fill="#e6e61e"/><path d="M1442,1470.3 L1455,1470.3 M1439.3,1473.5 L1439.3,1486.5 M1458.3,1473.5 L1458.3,1479.5 M1442,1489.5 L1449,1489.5" stroke="#8e8e3a" stroke-width="1.7"/><rect x="1437.5" y="1468.5" width="3.6" height="3.6" rx="0.8" fill="#7cc47a"/><rect x="1456.5" y="1468.5" width="3.6" height="3.6" rx="0.8" fill="#7cc47a"/><rect x="1437.5" y="1487.7" width="3.6" height="3.6" rx="0.8" fill="#7cc47a"/><path d="M1454,1488.5 L1460,1482.5" stroke="#f0c040" stroke-width="2" opacity="0.6"/><path d="M1459,1482.5 L1461,1481.0" stroke="#ee7a2a" stroke-width="2"/><path d="M1422,1460 L1439.5,1460 L1439.5,1465.5 L1432,1473 L1432,1500 L1429.3,1500 L1429.3,1473 L1422,1465.5 Z" fill="#58585b"/><circle cx="2099" cy="1482" r="8.5" fill="none" stroke="#979797" stroke-width="4.5" stroke-dasharray="3.2,2.6"/><circle cx="2099" cy="1482" r="6" fill="none" stroke="#979797" stroke-width="3.5"/></svg><svg width="2100" height="1500" viewBox="0 0 2100 1500"><rect x="896" y="1402.7" width="351.4" height="35.2" fill="#efefef"/><rect x="983.4" y="1402.7" width="38.6" height="35.2" fill="#0696d7"/><path d="M912,1409 C908,1412 907,1420 907,1420 C907,1428 909,1432 912,1432" fill="none" stroke="#555" stroke-width="1.6"/><path d="M903,1417 C899,1419 899,1423 903,1424 M917,1413 C921,1414 924,1417 924,1420 C924,1424 920,1425 917,1425" fill="none" stroke="#555" stroke-width="1.6"/><path d="M911.4,1416 L912.6,1419.2 L915.5,1420.2 L912.6,1421.2 L911.4,1424.5 L910.3,1421.2 L907.3,1420.2 L910.3,1419.2 Z" fill="#1a8fe0"/><path d="M931,1417.3 L940.6,1417.3 L935.8,1423.3 Z" fill="#2e2e2e"/><rect x="949.5" y="1414.5" width="23" height="17" fill="none" stroke="#555" stroke-width="1.8"/><rect x="954" y="1419.5" width="14" height="7" fill="#9a9ea8" stroke="#555" stroke-width="1.2"/><path d="M951,1414 L956,1409.5 L960,1412 L965,1409.5 L970,1409.5 L971,1414" fill="none" stroke="#666" stroke-width="1.5"/><path d="M993.5,1429.5 C990,1426 987.5,1422 988.5,1420.5 C989.5,1419 991,1420 993,1422.5 L993,1412 C993,1410 995.8,1410 995.8,1412 L996,1419 L996.3,1409.5 C996.3,1407.5 999.3,1407.5 999.3,1409.5 L999.5,1419 L1000,1410.5 C1000,1408.5 1003,1408.5 1003,1410.5 L1003,1419.5 L1004,1413 C1004,1411 1006.8,1411 1006.8,1413 L1006.5,1423 C1006,1428 1004,1431 1000,1431.5 L996.5,1431.5 C995,1431.5 994.5,1430.5 993.5,1429.5 Z" fill="#fff" stroke="#333" stroke-width="1.4" stroke-linejoin="round"/><circle cx="1034" cy="1420" r="6.5" fill="#dfe8ec" stroke="#555" stroke-width="1.8"/><path d="M1038.5,1424.5 L1044,1430" stroke="#333" stroke-width="3.2" stroke-linecap="round"/><path d="M1046,1411 L1046,1417 M1043,1414 L1049,1414 M1042.5,1419.5 L1050,1419.5" stroke="#444" stroke-width="1.4"/><rect x="1065.5" y="1409.5" width="22" height="22" fill="none" stroke="#555" stroke-width="1.3" stroke-dasharray="2.5,2"/><circle cx="1074.5" cy="1418.5" r="7.5" fill="#e6eef0" stroke="#555" stroke-width="1.8"/><path d="M1080,1424 L1086.5,1430.5" stroke="#333" stroke-width="3.2" stroke-linecap="round"/><path d="M1096.6,1417.3 L1105,1417.3 L1100.8,1423.3 Z" fill="#2e2e2e"/><rect x="1114.5" y="1409.5" width="22" height="16" rx="1.5" fill="#8fb0e0" stroke="#555" stroke-width="1.8"/><path d="M1122,1427 L1129,1427 L1130.5,1431.5 L1120.5,1431.5 Z" fill="#555"/><path d="M1141,1417.3 L1150,1417.3 L1145.5,1423.3 Z" fill="#2e2e2e"/><rect x="1160.5" y="1409.5" width="22.5" height="22" rx="1.2" fill="#5e5e62"/><path d="M1160.5,1413.5 L1183,1413.5 M1160.5,1417.5 L1183,1417.5 M1160.5,1421.5 L1183,1421.5 M1160.5,1425.5 L1183,1425.5 M1160.5,1429 L1183,1429 M1164.5,1409.5 L1164.5,1431.5 M1168.5,1409.5 L1168.5,1431.5 M1172.5,1409.5 L1172.5,1431.5 M1176.5,1409.5 L1176.5,1431.5 M1180,1409.5 L1180,1431.5" stroke="#f2f2f2" stroke-width="1.3"/><path d="M1187,1417.3 L1196,1417.3 L1191.5,1423.3 Z" fill="#2e2e2e"/><rect x="1206" y="1410" width="10" height="9.5" rx="1" fill="#9cb6e6" stroke="#3a57a8" stroke-width="1.5"/><rect x="1217.5" y="1410" width="10" height="9.5" rx="1" fill="#9cb6e6" stroke="#3a57a8" stroke-width="1.5"/><rect x="1206" y="1421" width="10" height="9.5" rx="1" fill="#9cb6e6" stroke="#3a57a8" stroke-width="1.5"/><rect x="1217.5" y="1421" width="10" height="9.5" rx="1" fill="#9cb6e6" stroke="#3a57a8" stroke-width="1.5"/><path d="M1232,1417.3 L1241,1417.3 L1236.5,1423.3 Z" fill="#2e2e2e"/><defs><filter id="vcb" x="-50%" y="-50%" width="200%" height="200%"><feGaussianBlur stdDeviation="4"/></filter><linearGradient id="vcg" x1="0" y1="0" x2="0" y2="1"><stop offset="0" stop-color="#ececec"/><stop offset="1" stop-color="#dcdcdc"/></linearGradient></defs><ellipse cx="2030" cy="336" rx="50" ry="5" fill="#8a8a8a" opacity="0.45" filter="url(#vcb)"/><rect x="2000" y="253.6" width="79.8" height="77.4" fill="url(#vcg)" stroke="#999" stroke-width="1" stroke-dasharray="3,2.5"/><rect x="2018" y="268" width="48" height="50" fill="#dcdde0" opacity="0.7"/><path d="M2003,240.5 L2004,334.5" stroke="#2233cc" stroke-width="2"/><path d="M2004,334 L2092.9,331" stroke="#e84444" stroke-width="2.2"/><path d="M1995,315.5 L2000,332" stroke="#66e066" stroke-width="1.6" opacity="0.7"/><path d="M2097,327 L2104,340 M2104,327 L2097,340" stroke="#ee5555" stroke-width="2"/></svg><div class="t" style="left:1996.10px;top:216.93px;font-size:22.54px;line-height:22.54px;color:#5c6cf2;font-weight:bold;transform:scaleX(0.8597);">Z</div><div class="t" style="left:2015.01px;top:281.33px;font-size:21.83px;line-height:21.83px;color:#878b93;font-weight:bold;transform:scaleX(0.7251);">FRONT</div><svg width="2100" height="1500" viewBox="0 0 2100 1500">
<defs>
<filter id="b1" x="-50%" y="-50%" width="200%" height="200%"><feGaussianBlur stdDeviation="1.2"/></filter>
<filter id="b2" x="-50%" y="-50%" width="200%" height="200%"><feGaussianBlur stdDeviation="2.5"/></filter>
<filter id="b4" x="-50%" y="-50%" width="200%" height="200%"><feGaussianBlur stdDeviation="4"/></filter>
<filter id="b6" x="-50%" y="-50%" width="200%" height="200%"><feGaussianBlur stdDeviation="6"/></filter>
<filter id="b10" x="-50%" y="-50%" width="200%" height="200%"><feGaussianBlur stdDeviation="10"/></filter>
<filter id="b16" x="-50%" y="-50%" width="200%" height="200%"><feGaussianBlur stdDeviation="16"/></filter>
<linearGradient id="gBody" gradientUnits="userSpaceOnUse" x1="902" y1="511" x2="1011" y2="650">
 <stop offset="0" stop-color="#6f6c66"/>
 <stop offset="0.05" stop-color="#8a867e"/>
 <stop offset="0.14" stop-color="#a69f93"/>
 <stop offset="0.24" stop-color="#8d897f"/>
 <stop offset="0.3" stop-color="#858179"/>
 <stop offset="0.4" stop-color="#a9a7a1"/>
 <stop offset="0.5" stop-color="#9e9c96"/>
 <stop offset="0.65" stop-color="#8c8a84"/>
 <stop offset="0.85" stop-color="#6a6863"/>
 <stop offset="1" stop-color="#4f4d49"/>
</linearGradient>
<linearGradient id="gNeck" gradientUnits="userSpaceOnUse" x1="1020" y1="425" x2="1130" y2="580">
 <stop offset="0" stop-color="#76736c"/>
 <stop offset="0.12" stop-color="#9c978c"/>
 <stop offset="0.3" stop-color="#8f8b82"/>
 <stop offset="0.42" stop-color="#b9b8b3"/>
 <stop offset="0.55" stop-color="#9a9892"/>
 <stop offset="0.75" stop-color="#6d6b66"/>
 <stop offset="1" stop-color="#53514d"/>
</linearGradient>
<linearGradient id="gTail" gradientUnits="userSpaceOnUse" x1="748" y1="680" x2="820" y2="752">
 <stop offset="0" stop-color="#6e6b65"/>
 <stop offset="0.18" stop-color="#8b877f"/>
 <stop offset="0.32" stop-color="#a6a39b"/>
 <stop offset="0.48" stop-color="#7f7c76"/>
 <stop offset="0.6" stop-color="#999790"/>
 <stop offset="0.78" stop-color="#6d6b66"/>
 <stop offset="1" stop-color="#52504c"/>
</linearGradient>
<linearGradient id="gRod" gradientUnits="userSpaceOnUse" x1="703" y1="757" x2="725" y2="786">
 <stop offset="0" stop-color="#6f6d68"/>
 <stop offset="0.18" stop-color="#9a978f"/>
 <stop offset="0.35" stop-color="#8a8780"/>
 <stop offset="0.55" stop-color="#f4f4f2"/>
 <stop offset="0.68" stop-color="#9c9a95"/>
 <stop offset="1" stop-color="#5c5a56"/>
</linearGradient>
<linearGradient id="gCap" gradientUnits="userSpaceOnUse" x1="652" y1="830" x2="697" y2="805">
 <stop offset="0" stop-color="#6e6c67"/>
 <stop offset="0.5" stop-color="#a3a19c"/>
 <stop offset="1" stop-color="#8a8883"/>
</linearGradient>
<radialGradient id="gHead" gradientUnits="userSpaceOnUse" cx="1180" cy="340" r="235">
 <stop offset="0" stop-color="#97948d"/>
 <stop offset="0.4" stop-color="#8c8982"/>
 <stop offset="0.7" stop-color="#6c6a65"/>
 <stop offset="1" stop-color="#52504c"/>
</radialGradient>
<linearGradient id="gPole" x1="0" y1="0" x2="1" y2="0">
 <stop offset="0" stop-color="#6f6d68"/>
 <stop offset="0.08" stop-color="#71706b"/>
 <stop offset="0.22" stop-color="#8b8984"/>
 <stop offset="0.45" stop-color="#87857e"/>
 <stop offset="0.62" stop-color="#8a8881"/>
 <stop offset="0.84" stop-color="#a19f99"/>
 <stop offset="0.96" stop-color="#8f8d88"/>
 <stop offset="1" stop-color="#7d7b76"/>
</linearGradient>
<linearGradient id="gPoleV" x1="0" y1="0" x2="0" y2="1">
 <stop offset="0" stop-color="#000" stop-opacity="0.05"/>
 <stop offset="0.1" stop-color="#000" stop-opacity="0"/>
 <stop offset="0.85" stop-color="#000" stop-opacity="0"/>
 <stop offset="1" stop-color="#000" stop-opacity="0.3"/>
</linearGradient>
<linearGradient id="gKnob" gradientUnits="userSpaceOnUse" x1="0" y1="633" x2="0" y2="772">
 <stop offset="0" stop-color="#7e7b74"/>
 <stop offset="0.3" stop-color="#8a8780"/>
 <stop offset="0.5" stop-color="#85837d"/>
 <stop offset="0.62" stop-color="#62605b"/>
 <stop offset="0.8" stop-color="#5a5853"/>
 <stop offset="0.9" stop-color="#6a6863"/>
 <stop offset="1" stop-color="#5c5a55"/>
</linearGradient>
<linearGradient id="gBase" gradientUnits="userSpaceOnUse" x1="0" y1="1166" x2="0" y2="1352">
 <stop offset="0" stop-color="#a6a6a0"/>
 <stop offset="0.15" stop-color="#a2a19b"/>
 <stop offset="0.22" stop-color="#8a877f"/>
 <stop offset="0.34" stop-color="#9e988c"/>
 <stop offset="0.44" stop-color="#858279"/>
 <stop offset="0.55" stop-color="#9a9892"/>
 <stop offset="0.66" stop-color="#75736d"/>
 <stop offset="0.8" stop-color="#595753"/>
 <stop offset="1" stop-color="#4a4844"/>
</linearGradient>
<linearGradient id="gBaseH" gradientUnits="userSpaceOnUse" x1="735" y1="0" x2="1284" y2="0">
 <stop offset="0" stop-color="#000" stop-opacity="0.3"/>
 <stop offset="0.1" stop-color="#000" stop-opacity="0.1"/>
 <stop offset="0.25" stop-color="#000" stop-opacity="0"/>
 <stop offset="0.75" stop-color="#000" stop-opacity="0"/>
 <stop offset="0.9" stop-color="#000" stop-opacity="0.1"/>
 <stop offset="1" stop-color="#000" stop-opacity="0.3"/>
</linearGradient>
<clipPath id="cRodClip"><path d="M600,700 L760,700 L790,760 L600,900 Z"/></clipPath>
<clipPath id="cNeck"><path d="M1047.4,406.2 L1006.7,436.7 Q1069,483.6 1127.4,587 L1165.8,547.6 Q1103,431.9 1047.4,406.2 Z"/></clipPath>
<clipPath id="cHead"><path d="M1047.4,406.2 C1048.3,401.0 1049.6,386.0 1053.0,375.0 C1056.4,364.0 1061.8,352.2 1068.0,340.0 C1074.2,327.8 1082.0,312.8 1090.0,302.0 C1098.0,291.2 1106.0,282.1 1116.0,275.0 C1126.0,267.9 1137.7,263.1 1150.0,259.2 C1162.3,255.3 1176.7,252.7 1190.0,251.5 C1203.3,250.3 1218.0,250.1 1230.0,252.0 C1242.0,253.9 1252.0,258.0 1262.0,263.0 C1272.0,268.0 1281.2,274.7 1290.0,282.0 C1298.8,289.3 1307.0,296.8 1315.0,307.0 C1323.0,317.2 1332.3,331.7 1338.0,343.0 C1343.7,354.3 1346.4,364.4 1349.0,375.0 C1351.6,385.6 1354.0,395.5 1353.8,406.3 C1353.6,417.1 1352.0,428.6 1348.0,440.0 C1344.0,451.4 1337.3,463.7 1330.0,475.0 C1322.7,486.3 1314.0,498.5 1304.0,508.0 C1294.0,517.5 1283.5,526.2 1270.0,532.0 C1256.5,537.8 1236.2,540.3 1222.7,542.8 C1209.2,545.3 1198.8,546.2 1189.3,547.0 C1179.8,547.8 1169.7,547.5 1165.8,547.6 Q1103,431.9 1047.4,406.2 Z"/></clipPath>
<clipPath id="cBase"><path d="M963.3,1166 L1054,1166 L1215,1197.5 C1219.7,1199.1 1235.0,1201.9 1243.0,1207.0 C1251.0,1212.1 1257.3,1219.7 1263.0,1228.0 C1268.7,1236.3 1273.6,1246.3 1277.0,1257.0 C1280.4,1267.7 1283.3,1280.8 1283.3,1292.0 C1283.3,1303.2 1281.2,1315.5 1277.0,1324.0 C1272.8,1332.5 1265.3,1338.5 1258.0,1343.0 C1250.7,1347.5 1237.2,1349.7 1233.0,1351.0 L783,1351.7 C778.8,1349.4 765.2,1345.0 758.0,1338.0 C750.8,1331.0 743.8,1319.7 740.0,1310.0 C736.2,1300.3 734.3,1291.2 735.0,1280.0 C735.7,1268.8 738.5,1253.8 744.0,1243.0 C749.5,1232.2 758.7,1222.5 768.0,1215.0 C777.3,1207.5 786.9,1203.0 800.0,1198.0 C813.1,1193.0 819.5,1190.3 846.7,1185.0 C873.9,1179.7 943.9,1169.2 963.3,1166.0 Z"/></clipPath>
<clipPath id="cKnob"><path d="M929.4,702.6 C933.8,698.2 946.9,683.9 956.0,676.0 C965.1,668.1 973.5,661.1 984.0,655.0 C994.5,648.9 1005.9,643.4 1019.0,639.6 C1032.1,635.8 1055.2,633.6 1062.4,632.4 C1064.0,635.0 1069.0,641.9 1072.0,648.0 C1075.0,654.1 1078.5,661.1 1080.6,669.0 C1082.7,676.9 1084.6,688.6 1084.8,695.6 C1085.0,702.6 1083.9,704.9 1082.0,711.0 C1080.1,717.1 1076.6,725.0 1073.6,732.0 C1070.6,739.0 1066.9,746.5 1063.8,753.0 C1060.7,759.5 1056.5,768.0 1055.0,771.0 L962.3,772 C960.5,768.8 955.2,760.2 951.8,753.0 C948.4,745.8 945.7,737.4 942.0,729.0 C938.3,720.6 931.5,707.0 929.4,702.6 Z"/></clipPath>
<clipPath id="cBody"><path d="M1006.7,436.7 C1001.7,440.0 986.0,450.6 976.7,456.6 C967.5,462.6 958.9,467.8 951.2,472.7 C943.6,477.6 937.0,481.6 930.8,486.0 C924.6,490.4 919.2,494.9 914.1,499.4 C909.0,503.9 904.7,508.4 900.0,513.1 C895.3,517.8 891.0,522.6 885.9,527.7 C880.8,532.8 875.2,538.4 869.2,543.8 C863.2,549.1 856.5,554.4 849.6,559.8 C842.7,565.2 835.1,570.4 827.9,576.2 C820.7,582.0 812.9,588.4 806.2,594.6 C799.5,600.8 793.2,607.0 787.9,613.3 C782.6,619.5 778.4,625.7 774.6,632.1 C770.8,638.5 766.6,648.4 765.0,651.7 Q804.15,678.35 842.7,741.2 C845.6,740.9 855.2,740.2 860.0,739.5 C864.8,738.8 865.5,739.1 871.7,737.0 C877.9,734.9 887.5,732.2 897.0,726.7 C906.5,721.2 923.7,707.8 929.0,704.0 L1000,660 L1062.4,632.4 L1127.4,587 Q1069,483.6 1006.7,436.7 Z"/></clipPath>
</defs>
<rect x="723" y="1350.5" width="590" height="1.2" fill="#cfcfcf"/>
<rect x="962.5" y="770" width="90.5" height="398" fill="url(#gPole)"/>
<rect x="962.5" y="770" width="90.5" height="398" fill="url(#gPoleV)"/>
<path d="M963.3,1166 L1054,1166 L1215,1197.5 C1219.7,1199.1 1235.0,1201.9 1243.0,1207.0 C1251.0,1212.1 1257.3,1219.7 1263.0,1228.0 C1268.7,1236.3 1273.6,1246.3 1277.0,1257.0 C1280.4,1267.7 1283.3,1280.8 1283.3,1292.0 C1283.3,1303.2 1281.2,1315.5 1277.0,1324.0 C1272.8,1332.5 1265.3,1338.5 1258.0,1343.0 C1250.7,1347.5 1237.2,1349.7 1233.0,1351.0 L783,1351.7 C778.8,1349.4 765.2,1345.0 758.0,1338.0 C750.8,1331.0 743.8,1319.7 740.0,1310.0 C736.2,1300.3 734.3,1291.2 735.0,1280.0 C735.7,1268.8 738.5,1253.8 744.0,1243.0 C749.5,1232.2 758.7,1222.5 768.0,1215.0 C777.3,1207.5 786.9,1203.0 800.0,1198.0 C813.1,1193.0 819.5,1190.3 846.7,1185.0 C873.9,1179.7 943.9,1169.2 963.3,1166.0 Z" fill="url(#gBase)"/>
<g clip-path="url(#cBase)">
 <rect x="700" y="1160" width="620" height="200" fill="url(#gBaseH)"/>
 <ellipse cx="1008" cy="1268" rx="272" ry="88" fill="none" stroke="#4f4d49" stroke-width="36" opacity="0.35" filter="url(#b16)"/>
 <path d="M1008,1228 C900,1228 830,1240 810,1262 M1008,1228 C1116,1228 1186,1240 1206,1262" fill="none" stroke="#aca597" stroke-width="14" opacity="0.5" filter="url(#b6)"/>
 <path d="M880,1282 C950,1292 1060,1292 1140,1282" fill="none" stroke="#a3a19b" stroke-width="10" opacity="0.35" filter="url(#b6)"/>
 <path d="M940,1160 L1070,1160 L1225,1196 C1180,1212 1100,1214 1005,1213 C910,1214 840,1210 790,1198 L846.7,1182 Z" fill="#a4a49e" filter="url(#b4)"/>
 <ellipse cx="1005" cy="1257" rx="30" ry="9" fill="#ffffff" filter="url(#b4)"/>
</g>
<path d="M963.3,1167 L1054,1167 L1215,1197.5 C1228,1200 1236,1203 1243,1207" fill="none" stroke="#1e1e1e" stroke-width="1.5"/>
<path d="M783,1352 L1233,1351" fill="none" stroke="#1e1e1e" stroke-width="1.5"/>
<path d="M765,651.7 L735,713.3 Q752,750 785.5,771.3 L820.7,753 L842.7,741.2 Q804.15,678.35 765,651.7 Z" fill="url(#gTail)"/>
<ellipse cx="760.2" cy="742.3" rx="38.4" ry="8.5" transform="rotate(49 760.2 742.3)" fill="#8f8d88" stroke="#1a1a1a" stroke-width="1.5"/>
<ellipse cx="761" cy="743" rx="32" ry="5" transform="rotate(49 761 743)" fill="#9e9c97" stroke="#1a1a1a" stroke-width="1"/>
<path d="M746,731 L669,791.8 L696.7,826.3 L774,767 Z" fill="url(#gRod)"/>
<ellipse cx="673.5" cy="818" rx="31.5" ry="14.5" transform="rotate(48 673.5 818)" fill="url(#gCap)"/>
<ellipse cx="670" cy="814" rx="24" ry="9" transform="rotate(48 670 814)" fill="#9f9d98"/>
<ellipse cx="670" cy="809" rx="4" ry="7" transform="rotate(48 670 809)" fill="#f2f2f0" opacity="0.9" filter="url(#b1)"/>
<path d="M652,800 C650,815 662,834 680,843 C688,846 695,845 697,838" fill="none" stroke="#1a1a1a" stroke-width="1.7"/>
<path d="M666,790 C682,800 694,818 697,838" fill="none" stroke="#1a1a1a" stroke-width="1.4"/>
<path d="M1006.7,436.7 C1001.7,440.0 986.0,450.6 976.7,456.6 C967.5,462.6 958.9,467.8 951.2,472.7 C943.6,477.6 937.0,481.6 930.8,486.0 C924.6,490.4 919.2,494.9 914.1,499.4 C909.0,503.9 904.7,508.4 900.0,513.1 C895.3,517.8 891.0,522.6 885.9,527.7 C880.8,532.8 875.2,538.4 869.2,543.8 C863.2,549.1 856.5,554.4 849.6,559.8 C842.7,565.2 835.1,570.4 827.9,576.2 C820.7,582.0 812.9,588.4 806.2,594.6 C799.5,600.8 793.2,607.0 787.9,613.3 C782.6,619.5 778.4,625.7 774.6,632.1 C770.8,638.5 766.6,648.4 765.0,651.7 Q804.15,678.35 842.7,741.2 C845.6,740.9 855.2,740.2 860.0,739.5 C864.8,738.8 865.5,739.1 871.7,737.0 C877.9,734.9 887.5,732.2 897.0,726.7 C906.5,721.2 923.7,707.8 929.0,704.0 L1000,660 L1062.4,632.4 L1127.4,587 Q1069,483.6 1006.7,436.7 Z" fill="url(#gBody)"/>
<g clip-path="url(#cBody)">
 <path d="M1085,470 C1040,500 990,535 950,563 C910,590 870,620 830,650" fill="none" stroke="#d9d8d4" stroke-width="34" opacity="0.6" filter="url(#b10)"/>
 <path d="M1085,470 C1040,500 990,535 950,563 C920,583 895,603 862,628" fill="none" stroke="#ffffff" stroke-width="12" opacity="0.95" filter="url(#b4)"/>
 <path d="M1120,600 C1080,620 1020,650 960,690 C920,715 890,730 850,745" fill="none" stroke="#4a4844" stroke-width="40" opacity="0.5" filter="url(#b16)"/>
</g>
<path d="M1047.4,406.2 L1006.7,436.7 Q1069,483.6 1127.4,587 L1165.8,547.6 Q1103,431.9 1047.4,406.2 Z" fill="url(#gNeck)"/>
<g clip-path="url(#cNeck)">
 <path d="M1130,440 L1020,520" fill="none" stroke="#d6d5d1" stroke-width="26" opacity="0.6" filter="url(#b6)"/>
 <path d="M1125,445 L1030,512" fill="none" stroke="#e6e6e4" stroke-width="8" opacity="0.8" filter="url(#b4)"/>
</g>
<path d="M1047.4,406.2 C1048.3,401.0 1049.6,386.0 1053.0,375.0 C1056.4,364.0 1061.8,352.2 1068.0,340.0 C1074.2,327.8 1082.0,312.8 1090.0,302.0 C1098.0,291.2 1106.0,282.1 1116.0,275.0 C1126.0,267.9 1137.7,263.1 1150.0,259.2 C1162.3,255.3 1176.7,252.7 1190.0,251.5 C1203.3,250.3 1218.0,250.1 1230.0,252.0 C1242.0,253.9 1252.0,258.0 1262.0,263.0 C1272.0,268.0 1281.2,274.7 1290.0,282.0 C1298.8,289.3 1307.0,296.8 1315.0,307.0 C1323.0,317.2 1332.3,331.7 1338.0,343.0 C1343.7,354.3 1346.4,364.4 1349.0,375.0 C1351.6,385.6 1354.0,395.5 1353.8,406.3 C1353.6,417.1 1352.0,428.6 1348.0,440.0 C1344.0,451.4 1337.3,463.7 1330.0,475.0 C1322.7,486.3 1314.0,498.5 1304.0,508.0 C1294.0,517.5 1283.5,526.2 1270.0,532.0 C1256.5,537.8 1236.2,540.3 1222.7,542.8 C1209.2,545.3 1198.8,546.2 1189.3,547.0 C1179.8,547.8 1169.7,547.5 1165.8,547.6 Q1103,431.9 1047.4,406.2 Z" fill="url(#gHead)"/>
<g clip-path="url(#cHead)">
 <path d="M1068.0,420.0 C1068.7,408.3 1066.7,369.2 1072.0,350.0 C1077.3,330.8 1087.0,317.2 1100.0,305.0 C1113.0,292.8 1131.7,283.2 1150.0,277.0 C1168.3,270.8 1190.0,266.7 1210.0,268.0 C1230.0,269.3 1252.5,275.0 1270.0,285.0 C1287.5,295.0 1304.0,310.5 1315.0,328.0 C1326.0,345.5 1333.2,371.3 1336.0,390.0 C1338.8,408.7 1332.7,431.7 1332.0,440.0" fill="none" stroke="#6c6861" stroke-width="14" opacity="0.65" filter="url(#b6)"/>
 <path d="M1092.0,425.0 C1093.0,413.3 1092.5,372.8 1098.0,355.0 C1103.5,337.2 1113.0,327.2 1125.0,318.0 C1137.0,308.8 1152.5,303.0 1170.0,300.0 C1187.5,297.0 1211.7,296.7 1230.0,300.0 C1248.3,303.3 1266.7,310.0 1280.0,320.0 C1293.3,330.0 1303.7,345.0 1310.0,360.0 C1316.3,375.0 1316.7,401.7 1318.0,410.0" fill="none" stroke="#aca598" stroke-width="18" opacity="0.7" filter="url(#b6)"/>
 <path d="M1100.0,450.0 C1110.0,444.2 1138.3,422.0 1160.0,415.0 C1181.7,408.0 1206.7,406.3 1230.0,408.0 C1253.3,409.7 1288.3,422.2 1300.0,425.0" fill="none" stroke="#a3a19b" stroke-width="14" opacity="0.5" filter="url(#b6)"/>
 <ellipse cx="1160" cy="355" rx="22" ry="13" fill="#66625b" opacity="0.8" filter="url(#b4)"/>
 <ellipse cx="1255" cy="372" rx="45" ry="16" transform="rotate(15 1255 372)" fill="#6a665f" opacity="0.75" filter="url(#b6)"/>
 <ellipse cx="1308" cy="392" rx="18" ry="30" fill="#a5a29b" opacity="0.5" filter="url(#b10)"/>
 <ellipse cx="1250" cy="510" rx="140" ry="55" transform="rotate(-20 1250 510)" fill="#4b4945" opacity="0.85" filter="url(#b16)"/>
 <path d="M1047.4,406.2 C1048.3,401.0 1049.6,386.0 1053.0,375.0 C1056.4,364.0 1061.8,352.2 1068.0,340.0 C1074.2,327.8 1082.0,312.8 1090.0,302.0 C1098.0,291.2 1106.0,282.1 1116.0,275.0 C1126.0,267.9 1137.7,263.1 1150.0,259.2 C1162.3,255.3 1176.7,252.7 1190.0,251.5 C1203.3,250.3 1218.0,250.1 1230.0,252.0 C1242.0,253.9 1252.0,258.0 1262.0,263.0 C1272.0,268.0 1281.2,274.7 1290.0,282.0 C1298.8,289.3 1307.0,296.8 1315.0,307.0 C1323.0,317.2 1332.3,331.7 1338.0,343.0 C1343.7,354.3 1346.4,364.4 1349.0,375.0 C1351.6,385.6 1354.0,395.5 1353.8,406.3 C1353.6,417.1 1352.0,428.6 1348.0,440.0 C1344.0,451.4 1337.3,463.7 1330.0,475.0 C1322.7,486.3 1314.0,498.5 1304.0,508.0 C1294.0,517.5 1283.5,526.2 1270.0,532.0 C1256.5,537.8 1236.2,540.3 1222.7,542.8 C1209.2,545.3 1198.8,546.2 1189.3,547.0 C1179.8,547.8 1169.7,547.5 1165.8,547.6 Q1103,431.9 1047.4,406.2 Z" fill="none" stroke="#9a9993" stroke-width="4" opacity="0.5" filter="url(#b1)"/>
 <ellipse cx="1196" cy="361" rx="18" ry="11" transform="rotate(50 1196 361)" fill="#cfcec9" opacity="0.7" filter="url(#b4)"/><ellipse cx="1196" cy="361" rx="11" ry="6.5" transform="rotate(50 1196 361)" fill="#ffffff" filter="url(#b2)"/>
</g>
<path d="M929.4,702.6 C933.8,698.2 946.9,683.9 956.0,676.0 C965.1,668.1 973.5,661.1 984.0,655.0 C994.5,648.9 1005.9,643.4 1019.0,639.6 C1032.1,635.8 1055.2,633.6 1062.4,632.4 C1064.0,635.0 1069.0,641.9 1072.0,648.0 C1075.0,654.1 1078.5,661.1 1080.6,669.0 C1082.7,676.9 1084.6,688.6 1084.8,695.6 C1085.0,702.6 1083.9,704.9 1082.0,711.0 C1080.1,717.1 1076.6,725.0 1073.6,732.0 C1070.6,739.0 1066.9,746.5 1063.8,753.0 C1060.7,759.5 1056.5,768.0 1055.0,771.0 L962.3,772 C960.5,768.8 955.2,760.2 951.8,753.0 C948.4,745.8 945.7,737.4 942.0,729.0 C938.3,720.6 931.5,707.0 929.4,702.6 Z" fill="url(#gKnob)"/>
<g clip-path="url(#cKnob)">
 <path d="M930,690 Q1005,712 1090,690" fill="none" stroke="#a9a7a1" stroke-width="9" opacity="0.8" filter="url(#b4)"/>
 <ellipse cx="1003" cy="673" rx="9" ry="18" fill="#d8d7d3" opacity="0.8" filter="url(#b4)"/><ellipse cx="1003" cy="672" rx="5" ry="11" fill="#ffffff" filter="url(#b2)"/>
 <ellipse cx="935" cy="730" rx="14" ry="45" fill="#000" opacity="0.12" filter="url(#b6)"/>
 <ellipse cx="1085" cy="700" rx="12" ry="50" fill="#000" opacity="0.1" filter="url(#b6)"/>
</g>
<path d="M1047.4,406.2 C1048.3,401.0 1049.6,386.0 1053.0,375.0 C1056.4,364.0 1061.8,352.2 1068.0,340.0 C1074.2,327.8 1082.0,312.8 1090.0,302.0 C1098.0,291.2 1106.0,282.1 1116.0,275.0 C1126.0,267.9 1137.7,263.1 1150.0,259.2 C1162.3,255.3 1176.7,252.7 1190.0,251.5 C1203.3,250.3 1218.0,250.1 1230.0,252.0 C1242.0,253.9 1252.0,258.0 1262.0,263.0 C1272.0,268.0 1281.2,274.7 1290.0,282.0 C1298.8,289.3 1307.0,296.8 1315.0,307.0 C1323.0,317.2 1332.3,331.7 1338.0,343.0 C1343.7,354.3 1346.4,364.4 1349.0,375.0 C1351.6,385.6 1354.0,395.5 1353.8,406.3 C1353.6,417.1 1352.0,428.6 1348.0,440.0 C1344.0,451.4 1337.3,463.7 1330.0,475.0 C1322.7,486.3 1314.0,498.5 1304.0,508.0 C1294.0,517.5 1283.5,526.2 1270.0,532.0 C1256.5,537.8 1236.2,540.3 1222.7,542.8 C1209.2,545.3 1198.8,546.2 1189.3,547.0 C1179.8,547.8 1169.7,547.5 1165.8,547.6 Q1103,431.9 1047.4,406.2 Z" fill="none" stroke="#000" stroke-width="0.8" opacity="0.25"/>
<path d="M1047.4,406.2 Q1103,431.9 1165.8,547.6" fill="none" stroke="#111" stroke-width="1.6"/>
<path d="M1006.7,436.7 Q1069,483.6 1127.4,587" fill="none" stroke="#111" stroke-width="1.6"/>
<path d="M765,651.7 Q804.15,678.35 842.7,741.2" fill="none" stroke="#111" stroke-width="1.6"/>
<path d="M1047.4,406.2 C1040.6,411.3 1018.5,428.3 1006.7,436.7 C994.9,445.1 986.0,450.6 976.7,456.6 C967.5,462.6 958.9,467.8 951.2,472.7 C943.6,477.6 937.0,481.6 930.8,486.0 C924.6,490.4 919.2,494.9 914.1,499.4 C909.0,503.9 904.7,508.4 900.0,513.1 C895.3,517.8 891.0,522.6 885.9,527.7 C880.8,532.8 875.2,538.4 869.2,543.8 C863.2,549.1 856.5,554.4 849.6,559.8 C842.7,565.2 835.1,570.4 827.9,576.2 C820.7,582.0 812.9,588.4 806.2,594.6 C799.5,600.8 793.2,607.0 787.9,613.3 C782.6,619.5 778.4,625.7 774.6,632.1 C770.8,638.5 766.6,648.4 765.0,651.7" fill="none" stroke="#111" stroke-width="1.5"/>
<path d="M1330.0,475.0 C1325.7,480.5 1314.0,498.5 1304.0,508.0 C1294.0,517.5 1283.5,526.2 1270.0,532.0 C1256.5,537.8 1236.2,540.3 1222.7,542.8 C1209.2,545.3 1198.8,546.2 1189.3,547.0 C1179.8,547.8 1169.7,547.5 1165.8,547.6" fill="none" stroke="#1e1e1e" stroke-width="1.3"/>
<path d="M929.4,702.6 C933.8,698.2 946.9,683.9 956.0,676.0 C965.1,668.1 973.5,661.1 984.0,655.0 C994.5,648.9 1005.9,643.4 1019.0,639.6 C1032.1,635.8 1055.2,633.6 1062.4,632.4" fill="none" stroke="#111" stroke-width="1.6"/>
<path d="M962.3,772 L1055,771" fill="none" stroke="#111" stroke-width="1.6"/>
</svg>
</body></html>
